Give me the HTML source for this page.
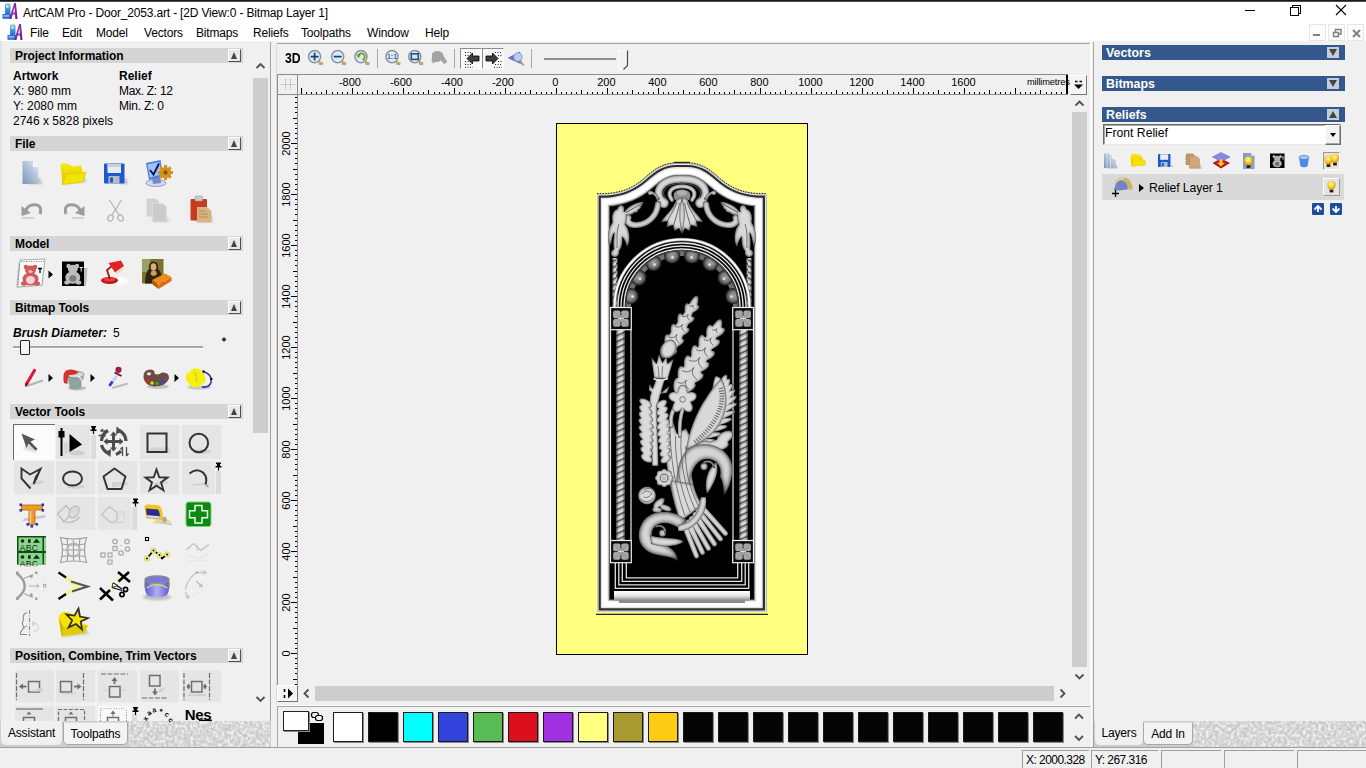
<!DOCTYPE html>
<html lang="en">
<head>
<meta charset="utf-8">
<title>ArtCAM Pro - Door_2053.art</title>
<style>
*{box-sizing:border-box;margin:0;padding:0}
html,body{width:1366px;height:768px;overflow:hidden}
body{position:relative;background:#f0f0f0;font-family:"Liberation Sans",Arial,sans-serif;font-size:12px;color:#000;line-height:1}
div,span,svg,b,i{position:absolute}
svg{overflow:visible}
.t{white-space:nowrap;line-height:14px;height:14px}
.ui{font-size:12px;letter-spacing:-0.17px;color:#000}
#topline{left:0;top:0;width:1366px;height:2px;background:linear-gradient(#1b1b1b 0,#1b1b1b 55%,#8a8a8a 100%)}
#titlebar{left:0;top:2px;width:1366px;height:20px;background:#fff}
#menubar{left:0;top:22px;width:1366px;height:19px;background:#fff}
.menu{top:26px}
.mdib{top:24px;width:17px;height:17px;border:1px solid #e6e6e6;background:#fcfcfc}
/* left */
.hdr{left:10px;width:233px;height:15px;background:#d5d5d5}
.hdr b{left:5px;top:1px;line-height:15px;font-size:12px;letter-spacing:-0.08px;white-space:nowrap}
.hdr i{right:2px;top:1px;width:13px;height:13px;background:#e8e8e8;border:1px solid;border-color:#fff #505050 #505050 #fff}
.hdr i:after{content:"";position:absolute;left:2px;top:2px;border:3.5px solid transparent;border-top:0;border-bottom:7px solid #444}
.lt{font-size:12px;white-space:nowrap;line-height:14px}
.cell{background:#e5e5e5}
.pin{background:#dcdcdc}
/* right */
.bh{left:1102px;width:243px;height:15px;background:#34588c}
.bh b{left:4px;top:1px;line-height:15px;font-size:12.4px;color:#fff;white-space:nowrap}
.bh i{right:6px;top:2px;width:12px;height:11px;background:#c3ccd9}
.bh i.dn:after{content:"";position:absolute;left:2px;top:2px;border:4px solid transparent;border-bottom:0;border-top:7px solid #444}
.bh i.up:after{content:"";position:absolute;left:2px;top:2px;border:4px solid transparent;border-top:0;border-bottom:7px solid #444}
.tabstrip{height:26px;background:#cdcdcd}
.tab{top:0;height:25px;line-height:24px;font-size:12px;letter-spacing:-0.17px;text-align:center;white-space:nowrap}
.sw{top:712px;width:30px;height:30px;border:1px solid #1a1a1a;box-shadow:1px 1px 0 #8a8a8a}
.sb{top:750px;height:18px;border-left:1px solid #a0a0a0;border-top:1px solid #a0a0a0;background:#f0f0f0}
.sb span{left:3px;top:1px;line-height:16px;font-size:12px;letter-spacing:-0.55px;white-space:nowrap}
.rl{font-size:11px;line-height:11px;white-space:nowrap;text-align:center;width:40px}
.rv{font-size:11px;line-height:11px;white-space:nowrap;text-align:center;width:40px;height:11px;transform:rotate(-90deg);transform-origin:50% 50%}
</style>
</head>
<body>
<div id="topline"></div>
<div id="titlebar"></div>
<div id="menubar"></div>
<span class="t ui" style="left:23px;top:5.5px">ArtCAM Pro - Door_2053.art - [2D View:0 - Bitmap Layer 1]</span>
<span class="t ui menu" style="left:30px">File</span>
<span class="t ui menu" style="left:62px">Edit</span>
<span class="t ui menu" style="left:96px">Model</span>
<span class="t ui menu" style="left:144px">Vectors</span>
<span class="t ui menu" style="left:196px">Bitmaps</span>
<span class="t ui menu" style="left:253px">Reliefs</span>
<span class="t ui menu" style="left:301px">Toolpaths</span>
<span class="t ui menu" style="left:367px">Window</span>
<span class="t ui menu" style="left:425px">Help</span>
<div class="mdib" style="left:1309px"></div>
<div class="mdib" style="left:1328px"></div>
<div class="mdib" style="left:1347px"></div>
<!-- LEFT PANEL -->
<div style="left:0;top:41px;width:2px;height:707px;background:linear-gradient(90deg,#dcdcdc,#ececec)"></div>
<div style="left:270px;top:42px;width:1px;height:679px;background:#a3a3a3"></div>
<div style="left:253px;top:78px;width:15px;height:355px;background:#cdcdcd"></div>
<div class="hdr" style="top:48px"><b>Project Information</b><i></i></div>
<span class="lt" style="left:13px;top:69px;font-weight:bold">Artwork</span>
<span class="lt" style="left:119px;top:69px;font-weight:bold">Relief</span>
<span class="lt" style="left:13px;top:84px">X: 980 mm</span>
<span class="lt" style="left:119px;top:84px;letter-spacing:-0.3px">Max. Z: 12</span>
<span class="lt" style="left:13px;top:99px">Y: 2080 mm</span>
<span class="lt" style="left:119px;top:99px;letter-spacing:-0.22px">Min. Z: 0</span>
<span class="lt" style="left:13px;top:114px">2746 x 5828 pixels</span>
<div class="hdr" style="top:136px"><b>File</b><i></i></div>
<div class="hdr" style="top:236px"><b>Model</b><i></i></div>
<div class="hdr" style="top:300px"><b>Bitmap Tools</b><i></i></div>
<span class="lt" style="left:13px;top:326px;font-weight:bold;font-style:italic;font-size:12px;letter-spacing:0.05px">Brush Diameter:</span>
<span class="lt" style="left:113px;top:326px">5</span>
<div style="left:13px;top:346px;width:190px;height:2px;background:#a8a8a8;border-bottom:1px solid #fff;height:3px"></div>
<div style="left:20px;top:340px;width:10px;height:15px;background:#f4f4f4;border:1px solid #222;border-radius:1px"></div>
<div class="hdr" style="top:404px"><b>Vector Tools</b><i></i></div>
<!-- vector tool cells -->
<div style="left:13px;top:424px;width:42px;height:36px;background:#fcfcfc;border-top:1px solid #6a6a6a;border-left:1px solid #6a6a6a"></div>
<div class="cell" style="left:56px;top:425px;width:34px;height:34px"></div>
<div class="pin" style="left:91px;top:435px;width:5px;height:24px"></div>
<div class="cell" style="left:140px;top:425px;width:39px;height:34px"></div>
<div class="cell" style="left:182px;top:425px;width:39px;height:34px"></div>
<div class="cell" style="left:14px;top:461px;width:40px;height:33px"></div>
<div class="cell" style="left:56px;top:461px;width:39px;height:33px"></div>
<div class="cell" style="left:98px;top:461px;width:39px;height:33px"></div>
<div class="cell" style="left:140px;top:461px;width:39px;height:33px"></div>
<div class="cell" style="left:182px;top:461px;width:33px;height:33px"></div>
<div class="pin" style="left:216px;top:471px;width:5px;height:23px"></div>
<div class="cell" style="left:56px;top:497px;width:39px;height:33px"></div>
<div class="cell" style="left:98px;top:497px;width:33px;height:33px"></div>
<div class="pin" style="left:132px;top:507px;width:5px;height:23px"></div>
<div class="hdr" style="top:648px"><b>Position, Combine, Trim Vectors</b><i></i></div>
<div class="cell" style="left:15px;top:670px;width:39px;height:32px"></div>
<div class="cell" style="left:56px;top:670px;width:39px;height:32px"></div>
<div class="cell" style="left:98px;top:670px;width:39px;height:32px"></div>
<div class="cell" style="left:140px;top:670px;width:39px;height:32px"></div>
<div class="cell" style="left:182px;top:670px;width:39px;height:32px"></div>
<div class="cell" style="left:15px;top:706px;width:39px;height:15px"></div>
<div class="cell" style="left:56px;top:706px;width:39px;height:15px"></div>
<div style="left:98px;top:706px;width:33px;height:15px;background:#f8f8f8"></div>
<div class="pin" style="left:132px;top:714px;width:5px;height:7px"></div>
<!-- left tabs -->
<div class="tabstrip" id="ltabs" style="left:0;top:721px;width:271px">
  <div class="tab" style="left:1px;width:61px;background:#f0f0f0;border-radius:0 0 5px 5px;height:24px">Assistant</div>
  <div class="tab" style="left:63px;width:65px;top:1px;height:23px;line-height:22px;background:#f3f3f3;border:1px solid #a8a8a8;border-top-color:#ddd;border-radius:0 0 5px 5px">Toolpaths</div>
</div>
<div style="left:0;top:747px;width:1366px;height:1px;background:#a0a0a0"></div>
<!-- CENTER: 2D VIEW -->
<div style="left:276px;top:43px;width:814px;height:1px;background:#a0a0a0"></div>
<div style="left:276px;top:43px;width:1px;height:662px;background:#dadada"></div>
<div style="left:1090px;top:43px;width:1px;height:662px;background:#fdfdfd"></div>
<div style="left:460px;top:48px;width:22px;height:21px;background:#f9f9f9;border:1px solid;border-color:#8c8c8c #fff #fff #8c8c8c"></div>
<div style="left:482px;top:48px;width:22px;height:21px;background:#f9f9f9;border:1px solid;border-color:#8c8c8c #fff #fff #8c8c8c"></div>
<div style="left:377px;top:49px;width:1px;height:19px;background:#a8a8a8"></div>
<div style="left:454px;top:49px;width:1px;height:19px;background:#a8a8a8"></div>
<div style="left:531px;top:49px;width:1px;height:19px;background:#a8a8a8"></div>
<span style="left:284.5px;top:48.6px;font-size:15.5px;line-height:18px;font-weight:bold;transform:scaleX(0.79);transform-origin:0 0">3D</span>
<div style="left:544px;top:58px;width:72px;height:2px;background:#8f8f8f"></div>
<div style="left:277px;top:74px;width:791px;height:1px;background:#8c8c8c"></div>
<div style="left:277px;top:94px;width:791px;height:1px;background:#8c8c8c"></div>
<div style="left:277px;top:74px;width:1px;height:611px;background:#8c8c8c"></div>
<div style="left:297px;top:74px;width:1px;height:611px;background:#8c8c8c"></div>
<span class="rl" style="left:329.9px;top:77px">-800</span>
<span class="rl" style="left:380.9px;top:77px">-600</span>
<span class="rl" style="left:431.9px;top:77px">-400</span>
<span class="rl" style="left:482.9px;top:77px">-200</span>
<span class="rl" style="left:535.4px;top:77px">0</span>
<span class="rl" style="left:586.4px;top:77px">200</span>
<span class="rl" style="left:637.4px;top:77px">400</span>
<span class="rl" style="left:688.4px;top:77px">600</span>
<span class="rl" style="left:739.4px;top:77px">800</span>
<span class="rl" style="left:790.4px;top:77px">1000</span>
<span class="rl" style="left:841.4px;top:77px">1200</span>
<span class="rl" style="left:892.4px;top:77px">1400</span>
<span class="rl" style="left:943.4px;top:77px">1600</span>
<span class="rv" style="left:265.5px;top:648.0px">0</span>
<span class="rv" style="left:265.5px;top:597.0px">200</span>
<span class="rv" style="left:265.5px;top:546.0px">400</span>
<span class="rv" style="left:265.5px;top:495.0px">600</span>
<span class="rv" style="left:265.5px;top:444.0px">800</span>
<span class="rv" style="left:265.5px;top:393.0px">1000</span>
<span class="rv" style="left:265.5px;top:342.0px">1200</span>
<span class="rv" style="left:265.5px;top:291.0px">1400</span>
<span class="rv" style="left:265.5px;top:240.0px">1600</span>
<span class="rv" style="left:265.5px;top:189.0px">1800</span>
<span class="rv" style="left:265.5px;top:138.0px">2000</span>
<span style="left:1027px;top:77px;font-size:9.3px;line-height:11px;letter-spacing:-0.15px;white-space:nowrap">millimetres</span>
<div style="left:1070px;top:75px;width:17px;height:20px;background:#f4f4f4;border:1px solid;border-color:#fff #777 #777 #fff"></div>
<div style="left:1072px;top:112px;width:15px;height:555px;background:#cdcdcd"></div>
<div style="left:277px;top:685px;width:21px;height:17px;background:#f4f4f4;border:1px solid;border-color:#fff #777 #777 #fff"></div>
<div style="left:315px;top:686px;width:739px;height:15px;background:#cdcdcd"></div>
<div style="left:277px;top:705px;width:813px;height:1px;background:#fbfbfb"></div>
<div style="left:277px;top:706px;width:813px;height:1px;background:#a6a6a6"></div>
<div style="left:277px;top:706px;width:1px;height:41px;background:#a6a6a6"></div>
<div style="left:298px;top:723px;width:26px;height:21px;background:#000"></div>
<div style="left:283px;top:711px;width:26px;height:20px;background:#fff;border:1px solid #222;box-shadow:1px 1px 0 #888"></div>
<div class="sw" style="left:333px;background:#ffffff"></div>
<div class="sw" style="left:368px;background:#000000"></div>
<div class="sw" style="left:403px;background:#00ffff"></div>
<div class="sw" style="left:438px;background:#3344dd"></div>
<div class="sw" style="left:473px;background:#58bb55"></div>
<div class="sw" style="left:508px;background:#dc0f1e"></div>
<div class="sw" style="left:543px;background:#a030e0"></div>
<div class="sw" style="left:578px;background:#ffff80"></div>
<div class="sw" style="left:613px;background:#a89a30"></div>
<div class="sw" style="left:648px;background:#fccc14"></div>
<div class="sw" style="left:683px;background:#050505"></div>
<div class="sw" style="left:718px;background:#050505"></div>
<div class="sw" style="left:753px;background:#050505"></div>
<div class="sw" style="left:788px;background:#050505"></div>
<div class="sw" style="left:823px;background:#050505"></div>
<div class="sw" style="left:858px;background:#050505"></div>
<div class="sw" style="left:893px;background:#050505"></div>
<div class="sw" style="left:928px;background:#050505"></div>
<div class="sw" style="left:963px;background:#050505"></div>
<div class="sw" style="left:998px;background:#050505"></div>
<div class="sw" style="left:1033px;background:#050505"></div>
<!-- RIGHT PANEL -->
<div style="left:1093px;top:42px;width:1px;height:705px;background:#a3a3a3"></div>
<div style="left:1091px;top:42px;width:1px;height:705px;background:#fafafa"></div>
<div class="bh" style="top:45px"><b>Vectors</b><i class="dn"></i></div>
<div class="bh" style="top:76px"><b>Bitmaps</b><i class="dn"></i></div>
<div class="bh" style="top:107px"><b>Reliefs</b><i class="up"></i></div>
<div style="left:1103px;top:124px;width:238px;height:21px;background:#fff;border:1px solid;border-color:#6a6a6a #e8e8e8 #e8e8e8 #6a6a6a;box-shadow:inset 1px 1px 0 #a8a8a8"></div>
<span class="lt" style="left:1105px;top:126px;font-size:12.2px">Front Relief</span>
<div style="left:1325px;top:125px;width:16px;height:20px;background:#f2f2f2;border:1px solid;border-color:#fff #6e6e6e #6e6e6e #fff;box-shadow:inset -1px -1px 0 #a8a8a8"></div>
<div style="left:1329.5px;top:133px;width:0;height:0;border:3.5px solid transparent;border-bottom:0;border-top:4px solid #000"></div>
<div style="left:1102px;top:174px;width:242px;height:26px;background:#d9d9d9"></div>
<span class="lt" style="left:1149px;top:181px;font-size:12.2px;letter-spacing:-0.1px">Relief Layer 1</span>
<div style="left:1139px;top:184px;width:0;height:0;border:4px solid transparent;border-right:0;border-left:5px solid #000"></div>
<div style="left:1323px;top:178px;width:17px;height:18px;background:#e4e4e4;border:1px solid;border-color:#fff #9a9a9a #9a9a9a #fff"></div>
<div style="left:1323px;top:152px;width:17px;height:18px;background:#e8e4dc;border:1px solid;border-color:#999 #fff #fff #999"></div>
<div style="left:1312px;top:203px;width:12px;height:12px;background:#1d4f9e;border-radius:1px"></div>
<div style="left:1330px;top:203px;width:12px;height:12px;background:#1d4f9e;border-radius:1px"></div>
<!-- right tabs -->
<div class="tabstrip" style="left:1094px;top:721px;width:272px">
  <div class="tab" style="left:1px;width:48px;background:#f0f0f0;height:24px;border-radius:0 0 5px 5px">Layers</div>
  <div class="tab" style="left:49px;width:50px;top:1px;height:23px;line-height:22px;background:#f3f3f3;border:1px solid #a8a8a8;border-top-color:#ddd;border-radius:0 0 5px 5px">Add In</div>
</div>
<!-- STATUS BAR -->
<div class="sb" style="left:1022px;width:67px"><span>X: 2000.328</span></div>
<div class="sb" style="left:1091px;width:67px"><span>Y: 267.316</span></div>
<div class="sb" style="left:1161px;width:60px"></div>
<div class="sb" style="left:1224px;width:70px"></div>
<div class="sb" style="left:1297px;width:69px"></div>
<svg id="ov" style="left:0;top:0" width="1366" height="768" viewBox="0 0 1366 768">
<defs>
<linearGradient id="gBlue" x1="0" y1="0" x2="0" y2="1"><stop offset="0" stop-color="#7cc8d8"/><stop offset=".45" stop-color="#4a98e4"/><stop offset="1" stop-color="#2468cc"/></linearGradient>
<linearGradient id="gPur" x1="0" y1="0" x2="1" y2="0"><stop offset="0" stop-color="#5a1a8a"/><stop offset=".5" stop-color="#a040c0"/><stop offset="1" stop-color="#6a0a80"/></linearGradient>
<g id="app">
 <rect x="2.5" y="0.5" width="5.5" height="11" rx="1.5" fill="url(#gBlue)"/>
 <rect x="3.7" y="2" width="2.6" height="3" rx="1" fill="#bfe6f4"/>
 <rect x="0" y="11" width="8.5" height="4.8" fill="#2a6fd2"/>
 <rect x="1" y="12.2" width="6" height="1.4" fill="#9fc4ee"/>
 <path d="M6.8 16 L11.6 0 L13.4 0 L15 16 L12.8 16 L12.5 11.5 L10.2 11.5 L9 16 Z M10.7 9.4 L12.4 9.4 L12.1 4 Z" fill="url(#gPur)" fill-rule="evenodd"/>
</g>
<g id="mag">
 <circle cx="0" cy="0" r="6" fill="#d6e9f6" stroke="#8796a6" stroke-width="1.6"/>
 <circle cx="0" cy="0" r="4.6" fill="none" stroke="#f3f9fd" stroke-width=".8"/>
 <path d="M4.6 4.2 L8.6 6.2 Q9.2 8.2 7.6 8.6 L4.2 8.2 Q3.4 6 4.6 4.2Z" fill="#c9a268"/>
</g>
<filter id="noise" x="0" y="0" width="100%" height="100%" color-interpolation-filters="sRGB"><feTurbulence type="fractalNoise" baseFrequency="0.32" numOctaves="2" seed="3" result="n"/><feColorMatrix in="n" type="matrix" values="0 0 0 0 1  0 0 0 0 1  0 0 0 0 1  1.8 0 0 0 -0.62"/></filter>
</defs>
<use href="#app" x="2.5" y="3"/>
<use href="#app" x="7.5" y="24"/>
<!-- window controls -->
<g stroke="#000" stroke-width="1" fill="none" shape-rendering="crispEdges">
 <path d="M1245 10.5H1255"/>
 <path d="M1290.5 7.5H1298.5V15.5H1290.5Z M1292.5 7.5V5.5H1300.5V13.5H1298.5"/>
</g>
<path d="M1336 5L1346 15M1346 5L1336 15" stroke="#000" stroke-width="1.1" fill="none"/>
<g stroke="#808080" fill="none">
 <path d="M1313 35H1320" stroke-width="2"/>
 <path d="M1333.5 32.5H1338.5V36.5H1333.5Z M1335.5 32V29.5H1341V34H1339" stroke-width="1.4"/>
 <path d="M1353 30L1360 37M1360 30L1353 37" stroke-width="2"/>
</g>
<!-- toolbar icons -->
<use href="#mag" x="314.6" y="56.6"/>
<path d="M310.6 56.6H318.6M314.6 52.6V60.6" stroke="#1c3f6e" stroke-width="1.7"/>
<use href="#mag" x="337.7" y="56.6"/>
<path d="M333.7 56.6H341.7" stroke="#1c3f6e" stroke-width="1.7"/>
<use href="#mag" x="361" y="56.6"/>
<path d="M362.5 60 A3.4 3.4 0 1 0 358.2 55.6" stroke="#7d9a1c" stroke-width="1.8" fill="none"/><path d="M356.2 54.4 L360.8 54.6 L358.4 58.6Z" fill="#7d9a1c"/>
<use href="#mag" x="392" y="56.6"/>
<text x="392" y="59.2" font-family="Liberation Sans, sans-serif" font-size="7" font-weight="bold" fill="#4a6a8e" text-anchor="middle">1:1</text>
<use href="#mag" x="414.8" y="56.6"/>
<rect x="411.3" y="53.8" width="7" height="5.6" fill="none" stroke="#24507f" stroke-width="1.6"/>
<path d="M432 57 Q431 51 437 51 Q443 51 443.6 56 L447.4 62 L444 64 L441 60.6 Q438 62.5 435 62 L433 63.6 L431.5 60.5Z" fill="#a3a3a3"/>
<!-- toolbar push buttons -->
<g fill="#3d3d3d">
 <path d="M467 58.5 L472.5 53 V56 H479 V61 H472.5 V64Z" stroke="#000" stroke-width=".8"/>
 <path d="M498 58.5 L492.5 53 V56 H486 V61 H492.5 V64Z" stroke="#000" stroke-width=".8"/>
</g>
<g stroke="#222" stroke-width="1" stroke-dasharray="1 1.5" fill="none">
 <path d="M465 52.5H472M465 55.5H469M465 61.5H469M465 64.5H472M465 67.3H473"/>
 <path d="M495 52.5H502M498 55.5H502M498 61.5H502M495 64.5H502M494 67.3H502"/>
</g>
<!-- eye/look icon -->
<path d="M507.6 58 L520 51.5 L522 64.5Z" fill="#5a6ecb"/>
<circle cx="518" cy="57" r="4.2" fill="#b9cff0" stroke="#8c9cc8" stroke-width="1"/>
<path d="M521 60.5 L524.6 65 L523 66 L519.8 62Z" fill="#c9a268"/>
<!-- slider thumb -->
<path d="M618.5 50.5H627.5V65.5L623.5 69.5H618.5Z" fill="#f2f2f2" stroke="#fdfdfd" stroke-width="1"/>
<path d="M627.5 50.5V65.5L623.5 69.5" fill="none" stroke="#4a4a4a" stroke-width="1.2"/>
<!-- ruler origin icon -->
<g stroke="#b4b4b4" stroke-width="1" stroke-dasharray="1.5 1" fill="none"><path d="M281 84.5H295M285.5 79V90M290.5 79V90"/></g>
<!-- ruler end btn glyph -->
<path d="M1074 84.5H1083L1078.5 89Z" fill="#000"/><path d="M1075 81.5H1077.5M1079.5 81.5H1082" stroke="#000" stroke-width="1.4"/>
<!-- bottom-left btn glyph -->
<path d="M288 688.5V698.5L293 693.5Z" fill="#000"/><path d="M284.5 689V692M284.5 695V698" stroke="#000" stroke-width="1.6"/>
<!-- scrollbar arrows -->
<g stroke="#505050" stroke-width="1.8" fill="none">
 <path d="M256.5 68L260.5 64L264.5 68"/>
 <path d="M256.5 697L260.5 701L264.5 697"/>
 <path d="M1075.5 105.5L1079.5 101.5L1083.5 105.5"/>
 <path d="M1075.5 674.5L1079.5 678.5L1083.5 674.5"/>
 <path d="M308.5 689.5L304.5 693.5L308.5 697.5"/>
 <path d="M1060.5 689.5L1064.5 693.5L1060.5 697.5"/>
 <path d="M1075 718.5L1079 714.5L1083 718.5"/>
 <path d="M1075 736L1079 740L1083 736"/>
</g>
<!-- palette link icon -->
<g stroke="#000" stroke-width="1.2" fill="#f0f0f0"><rect x="311.5" y="712.5" width="7" height="5" rx="2.2"/><rect x="315.5" y="715.5" width="7" height="5" rx="2.2"/></g>
<!-- tabstrip texture -->
<rect x="129" y="721" width="141" height="26" fill="#c9c9c9"/><rect x="129" y="721" width="141" height="26" fill="#fff" filter="url(#noise)"/>
<rect x="1193" y="721" width="173" height="26" fill="#c9c9c9"/><rect x="1193" y="721" width="173" height="26" fill="#fff" filter="url(#noise)"/>
<path d="M301.5 88V94M306.5 92V94M311.5 92V94M316.5 92V94M321.5 92V94M326.5 90V94M332.5 92V94M337.5 92V94M342.5 92V94M347.5 92V94M352.5 88V94M357.5 92V94M362.5 92V94M367.5 92V94M372.5 92V94M377.5 90V94M383.5 92V94M388.5 92V94M393.5 92V94M398.5 92V94M403.5 88V94M408.5 92V94M413.5 92V94M418.5 92V94M423.5 92V94M428.5 90V94M434.5 92V94M439.5 92V94M444.5 92V94M449.5 92V94M454.5 88V94M459.5 92V94M464.5 92V94M469.5 92V94M474.5 92V94M479.5 90V94M485.5 92V94M490.5 92V94M495.5 92V94M500.5 92V94M505.5 88V94M510.5 92V94M515.5 92V94M520.5 92V94M525.5 92V94M530.5 90V94M536.5 92V94M541.5 92V94M546.5 92V94M551.5 92V94M556.5 88V94M561.5 92V94M566.5 92V94M571.5 92V94M576.5 92V94M581.5 90V94M587.5 92V94M592.5 92V94M597.5 92V94M602.5 92V94M607.5 88V94M612.5 92V94M617.5 92V94M622.5 92V94M627.5 92V94M632.5 90V94M638.5 92V94M643.5 92V94M648.5 92V94M653.5 92V94M658.5 88V94M663.5 92V94M668.5 92V94M673.5 92V94M678.5 92V94M683.5 90V94M689.5 92V94M694.5 92V94M699.5 92V94M704.5 92V94M709.5 88V94M714.5 92V94M719.5 92V94M724.5 92V94M729.5 92V94M734.5 90V94M740.5 92V94M745.5 92V94M750.5 92V94M755.5 92V94M760.5 88V94M765.5 92V94M770.5 92V94M775.5 92V94M780.5 92V94M785.5 90V94M791.5 92V94M796.5 92V94M801.5 92V94M806.5 92V94M811.5 88V94M816.5 92V94M821.5 92V94M826.5 92V94M831.5 92V94M836.5 90V94M842.5 92V94M847.5 92V94M852.5 92V94M857.5 92V94M862.5 88V94M867.5 92V94M872.5 92V94M877.5 92V94M882.5 92V94M887.5 90V94M893.5 92V94M898.5 92V94M903.5 92V94M908.5 92V94M913.5 88V94M918.5 92V94M923.5 92V94M928.5 92V94M933.5 92V94M938.5 90V94M944.5 92V94M949.5 92V94M954.5 92V94M959.5 92V94M964.5 88V94M969.5 92V94M974.5 92V94M979.5 92V94M984.5 92V94M989.5 90V94M995.5 92V94M1000.5 92V94M1005.5 92V94M1010.5 92V94M1015.5 88V94M1020.5 92V94M1025.5 92V94M1030.5 92V94M1035.5 92V94M1040.5 90V94M1046.5 92V94M1051.5 92V94M1056.5 92V94M1061.5 92V94M1066.5 75V94M1067.5 75V94M295 684.5H297M293 679.5H297M295 673.5H297M295 668.5H297M295 663.5H297M295 658.5H297M291 653.5H297M295 648.5H297M295 643.5H297M295 638.5H297M295 633.5H297M293 628.5H297M295 622.5H297M295 617.5H297M295 612.5H297M295 607.5H297M291 602.5H297M295 597.5H297M295 592.5H297M295 587.5H297M295 582.5H297M293 577.5H297M295 571.5H297M295 566.5H297M295 561.5H297M295 556.5H297M291 551.5H297M295 546.5H297M295 541.5H297M295 536.5H297M295 531.5H297M293 526.5H297M295 520.5H297M295 515.5H297M295 510.5H297M295 505.5H297M291 500.5H297M295 495.5H297M295 490.5H297M295 485.5H297M295 480.5H297M293 475.5H297M295 469.5H297M295 464.5H297M295 459.5H297M295 454.5H297M291 449.5H297M295 444.5H297M295 439.5H297M295 434.5H297M295 429.5H297M293 424.5H297M295 418.5H297M295 413.5H297M295 408.5H297M295 403.5H297M291 398.5H297M295 393.5H297M295 388.5H297M295 383.5H297M295 378.5H297M293 373.5H297M295 367.5H297M295 362.5H297M295 357.5H297M295 352.5H297M291 347.5H297M295 342.5H297M295 337.5H297M295 332.5H297M295 327.5H297M293 322.5H297M295 316.5H297M295 311.5H297M295 306.5H297M295 301.5H297M291 296.5H297M295 291.5H297M295 286.5H297M295 281.5H297M295 276.5H297M293 271.5H297M295 265.5H297M295 260.5H297M295 255.5H297M295 250.5H297M291 245.5H297M295 240.5H297M295 235.5H297M295 230.5H297M295 225.5H297M293 220.5H297M295 214.5H297M295 209.5H297M295 204.5H297M295 199.5H297M291 194.5H297M295 189.5H297M295 184.5H297M295 179.5H297M295 174.5H297M293 169.5H297M295 163.5H297M295 158.5H297M295 153.5H297M295 148.5H297M291 143.5H297M295 138.5H297M295 133.5H297M295 128.5H297M295 123.5H297M293 118.5H297M295 112.5H297M295 107.5H297M295 102.5H297M295 97.5H297" stroke="#000" stroke-width="1" fill="none" shape-rendering="crispEdges"/>
<defs>
<linearGradient id="gPage" x1="0" y1="1" x2="1" y2="0"><stop offset="0" stop-color="#7d95bb"/><stop offset=".6" stop-color="#b8c6dc"/><stop offset="1" stop-color="#eef2f8"/></linearGradient>
<linearGradient id="gFold" x1="0" y1="0" x2="0" y2="1"><stop offset="0" stop-color="#f7ea10"/><stop offset="1" stop-color="#dcc800"/></linearGradient>
<linearGradient id="gShadow" x1="0" y1="0" x2="1" y2="0"><stop offset="0" stop-color="#9a9a9a"/><stop offset="1" stop-color="#d0d0d0"/></linearGradient>
<linearGradient id="gCup" x1="0" y1="0" x2="1" y2="0"><stop offset="0" stop-color="#5a5ad0"/><stop offset=".5" stop-color="#b0b0f4"/><stop offset="1" stop-color="#5a5ad0"/></linearGradient>
<filter id="blur1" x="-20%" y="-20%" width="140%" height="140%"><feGaussianBlur stdDeviation="0.8"/></filter>
<g id="tri"><path d="M0 0V8L4.5 4Z" fill="#000"/></g>
<g id="pinic"><path d="M0.5 0H5.5V1.6H4.6V3.6H6V5H3.6V8H2.4V5H0V3.6H1.4V1.6H0.5Z" fill="#000"/></g>
</defs>
<!-- ===== FILE row 1 ===== -->
<path d="M27 184H43L40 178H30Z" fill="#c4c4c4" filter="url(#blur1)"/>
<path d="M22.5 161H33L38.5 167V184H22.5Z" fill="url(#gPage)"/><path d="M33 161V167H38.5Z" fill="#f6f8fb"/>
<path d="M62 184 L86 182 L84 176 L66 178Z" fill="#bdbdbd" filter="url(#blur1)"/>
<path d="M60.5 166 Q61 162.5 64 163 L70 164.5 L72 166.5 L80 165.5 Q82 166 82 168 L82.5 172 L86 172.5 L83 182 L62.5 184.5 Z" fill="url(#gFold)"/>
<path d="M62.5 184.5 L66 174.5 L86 172.5 L83 182Z" fill="#f3e300" stroke="#d6c200" stroke-width=".5"/>
<path d="M120 184H128L126 178H120Z" fill="#bdbdbd" filter="url(#blur1)"/>
<rect x="104" y="163.5" width="20.5" height="20" rx="1" fill="#1c5acb"/>
<rect x="107.5" y="164" width="13.5" height="9" fill="#e9edf2"/><rect x="107.5" y="164" width="13.5" height="3" fill="#c9d0da"/>
<rect x="108.5" y="176" width="11" height="7.5" fill="#b4bcc8"/><rect x="110" y="177.5" width="3" height="5" fill="#1c5acb"/>
<!-- options -->
<ellipse cx="156" cy="183" rx="10" ry="3.5" fill="#d0d8ea" stroke="#8090c0" stroke-width=".8"/>
<path d="M152 178 L160 176 L161 183 L153 184Z" fill="#7a86c8"/>
<path d="M146 163 L160.5 160 L163 176 L149 180Z" fill="#4a7fe0"/><path d="M147.5 164.5 L159.5 162 L161.5 174.5 L150 177.5Z" fill="#9ec4f4"/>
<path d="M150 170 L153.5 174.5 L159 163.5" stroke="#0c0c50" stroke-width="1.8" fill="none"/>
<circle cx="165.5" cy="172.5" r="5.6" fill="#d8901c"/><circle cx="165.5" cy="172.5" r="2" fill="#7a5010"/>
<g stroke="#d8901c" stroke-width="3"><path d="M165.5 165V180M158 172.5H173M160.2 167.2L170.8 177.8M170.8 167.2L160.2 177.8"/></g><circle cx="165.5" cy="172.5" r="2" fill="#805410"/>
<!-- ===== FILE row 2 (disabled) ===== -->
<g fill="none" stroke="#9c9c9c" stroke-width="3"><path d="M40 214 Q43 203.5 32 205 Q27 206 26 211"/><path d="M66 214 Q63 203.5 74 205 Q79 206 80 211"/></g>
<path d="M21.5 206 L31 213 L21.5 216Z" fill="#9c9c9c"/><path d="M84.5 206 L75 213 L84.5 216Z" fill="#9c9c9c"/>
<path d="M22 218H34M72 218H84" stroke="#c8c8c8" stroke-width="1.5"/>
<g fill="none" stroke="#b2b2b2" stroke-width="1.2"><path d="M109.5 200 L119 215M121.5 200 L112 215"/><ellipse cx="110.5" cy="218" rx="2.6" ry="3.2" transform="rotate(30 110.5 218)"/><ellipse cx="120.5" cy="218" rx="2.6" ry="3.2" transform="rotate(-30 120.5 218)"/></g>
<path d="M152 222H170L167 216H152Z" fill="#d6d6d6" filter="url(#blur1)"/>
<path d="M146.5 198.500H156L159 201.500V216.500H146.500Z" fill="#d2d2d2"/><path d="M152.5 203.500H163L166.5 207V222H152.500Z" fill="#cbcbcb" stroke="#e2e2e2" stroke-width=".6"/>
<!-- paste -->
<path d="M196 222H213L211 216H196Z" fill="#c4c4c4" filter="url(#blur1)"/>
<rect x="190.5" y="199" width="16.5" height="21.5" rx="1" fill="#c63a22"/><rect x="195" y="196" width="7.5" height="5" rx="1" fill="#c9c9c9" stroke="#9a9a9a" stroke-width=".6"/>
<path d="M197 207H207L211.5 211V222.500H197Z" fill="#d9b384"/><path d="M199 211H206M199 214H208M199 217H208" stroke="#b48a58" stroke-width=".9"/>
<!-- ===== MODEL ===== -->
<path d="M18 262 L45 260 L43 286 L16 288Z" fill="#d9d9d9"/><path d="M20 260 L45 259 L42 285 L17.5 287Z" fill="#fbfbfb" stroke="#9a9a9a" stroke-width=".8"/>
<path d="M21 261.500H44" stroke="#777" stroke-width="1" stroke-dasharray="1 1.5"/><path d="M19.5 264 L18 285" stroke="#777" stroke-width="1" stroke-dasharray="1 1.5"/>
<g fill="#d25a5a"><circle cx="26" cy="267" r="2.3"/><circle cx="35" cy="267" r="2.3"/><ellipse cx="30.5" cy="270" rx="5.5" ry="4.6"/><ellipse cx="30.5" cy="279" rx="8" ry="6.5"/><ellipse cx="24" cy="283.5" rx="3" ry="2.2"/><ellipse cx="37" cy="283.5" rx="3" ry="2.2"/></g>
<ellipse cx="30.5" cy="280" rx="4.5" ry="4" fill="#f6d6d6"/><ellipse cx="30.5" cy="271.5" rx="2.2" ry="1.6" fill="#f0b8b8"/>
<path d="M38 268.500H42M40 268.500V273" stroke="#000" stroke-width="1.3"/>
<use href="#tri" x="48.5" y="270.5"/>
<path d="M84 268H87.500L86 286H84Z" fill="#bdbdbd"/>
<rect x="62" y="261.5" width="22" height="24.5" fill="#000"/>
<g fill="#bdbdbd"><circle cx="68.5" cy="266" r="2.2"/><circle cx="77" cy="266" r="2.2"/><ellipse cx="72.8" cy="269" rx="5" ry="4.2"/><ellipse cx="72.8" cy="277.5" rx="7.5" ry="6.2"/><ellipse cx="67" cy="282.5" rx="2.8" ry="2"/><ellipse cx="78.5" cy="282.5" rx="2.8" ry="2"/></g>
<ellipse cx="72.8" cy="278.5" rx="3.6" ry="3.3" fill="#7d7d7d"/><path d="M79.5 267.500H83M81.2 267.500V271.5" stroke="#e8e8e8" stroke-width="1.1"/>
<ellipse cx="119" cy="281" rx="10" ry="3.5" fill="#fff" filter="url(#blur1)"/>
<ellipse cx="109.5" cy="280.5" rx="8.5" ry="3.4" fill="#c41414"/><ellipse cx="109.5" cy="279.5" rx="6" ry="2" fill="#e84040"/>
<path d="M110 279 L107 270 L112 266" stroke="#a81010" stroke-width="1.8" fill="none"/>
<path d="M108.5 263 L121 260.5 L124 266 L115 272.500Z" fill="#e22222"/><path d="M115 272.5 L124 266 L123 269.5 L117.5 273.500Z" fill="#f8d0c0"/>
<rect x="142" y="259" width="21.5" height="24.5" fill="#7b7232"/><path d="M142 259H150V272H142Z" fill="#98a068"/>
<path d="M145 283.5 Q145 272 149 269 Q148 262 153.5 261.5 Q159 262 158 269 Q162 272 163 283.500Z" fill="#2e2412"/><ellipse cx="153.5" cy="267" rx="2.9" ry="3.7" fill="#dcae6c"/><path d="M150.5 274 Q153.5 278 157 274 L156 271 H151.500Z" fill="#cfa060"/>
<path d="M152 280 L165 273.5 L171.5 277 L158.5 285Z" fill="#f08a1c"/><path d="M152 280 L158.5 285 L158.5 289 L152 284Z" fill="#b85a08"/><path d="M158.5 285 L171.5 277 L171.5 281 L158.5 289Z" fill="#d86c10"/>
<!-- ===== BITMAP TOOLS ===== -->
<path d="M224 337L226.5 339.5L224 342L221.5 339.5Z" fill="#2a3a6a"/>
<path d="M25 386.5 L43 380.5" stroke="#b4b4b4" stroke-width="2.2"/>
<path d="M26.5 384 L34.5 370.5" stroke="#d8203c" stroke-width="3.2" stroke-linecap="round"/><path d="M25.5 386 L27.5 382.5" stroke="#8a1020" stroke-width="1.6"/>
<use href="#tri" x="48.5" y="374"/>
<ellipse cx="77" cy="388" rx="9" ry="2.6" fill="#bdbdbd"/>
<path d="M67 375 L70 388.5 Q76 391 82 387.5 L84 374Z" fill="#8ea49c"/><ellipse cx="75.5" cy="374.5" rx="8.6" ry="3.4" fill="#d0dcd8" stroke="#70847c" stroke-width=".7"/>
<path d="M78 376 Q84 380 82 387" stroke="#f4f4f4" stroke-width="1.5" fill="none"/>
<path d="M64 383 Q62 374 66 370.5 Q73 367.5 79 372.5 Q74 375.5 69 375 Q67 379 67.5 384Z" fill="#d43030"/>
<use href="#tri" x="90.5" y="374"/>
<path d="M112 388 L128 383.5" stroke="#bdbdbd" stroke-width="2.2"/>
<circle cx="118.5" cy="369.8" r="3.1" fill="#a01a44"/><path d="M114.5 372.5 L121.5 376" stroke="#5a1030" stroke-width="1.8"/>
<path d="M117 375.5 L110.5 384.5" stroke="#cfd4ee" stroke-width="3.2"/><path d="M112.5 381.5 L109.3 386" stroke="#2c3cc0" stroke-width="2.6"/>
<ellipse cx="158" cy="386.5" rx="11" ry="2.5" fill="#c4c4c4"/>
<path d="M143.5 378 Q142.5 369.5 151 369.5 Q155 370 154.5 373.5 Q157.5 376 162 372.5 Q169.5 372 169 378.5 Q166 386.5 154 386.5 Q145 385.5 143.5 378Z" fill="#6c4c3c"/>
<ellipse cx="149" cy="373.8" rx="2.2" ry="1.6" fill="#e8e0dc"/>
<circle cx="147.5" cy="380.5" r="1.7" fill="#e02020"/><circle cx="152" cy="383" r="1.7" fill="#f0d820"/><circle cx="157" cy="383.5" r="1.7" fill="#28b028"/><circle cx="162" cy="381.5" r="1.7" fill="#2848e0"/><circle cx="165.5" cy="378" r="1.5" fill="#9030c0"/>
<use href="#tri" x="174.5" y="374"/>
<ellipse cx="199" cy="387.5" rx="12" ry="2.2" fill="#c8c8c8"/>
<path d="M203 371.5 Q212.5 374 211 382.5 Q209 388 202 387" stroke="#2a3a9a" stroke-width="1.6" fill="none"/><circle cx="203.5" cy="371.5" r="1.3" fill="#111"/><circle cx="211.3" cy="379" r="1.3" fill="#111"/>
<path d="M186 377 Q185.5 372.5 190 372.5 Q190.5 368 195.5 368.5 Q201 368 201.5 372.5 Q206 373.5 205 378 Q207 383.5 201.5 384 Q199.5 388 194.5 387 Q189 387 189 383 Q185 381.5 186 377Z" fill="#f4f010"/>
<path d="M194 372 Q198 376 196 382" stroke="#dcd400" stroke-width="1.4" fill="none"/>
<defs><clipPath id="abcclip"><rect x="17" y="536" width="29" height="28.5"/></clipPath></defs>
<!-- ===== VECTOR TOOLS row 1 ===== -->
<path d="M23 449 L36 452 L38 448 L27 444Z" fill="#d6d6d6" filter="url(#blur1)"/>
<path d="M21.5 433.5 L35 439.5 L30.5 441.5 L37.5 449 L35.5 450.5 L28.5 443.5 L26.5 448Z" fill="#555"/>
<ellipse cx="77" cy="453" rx="8" ry="2.5" fill="#cfcfcf"/><ellipse cx="66" cy="448" rx="2.5" ry="6" fill="#d4d4d4"/>
<path d="M61.5 428V456" stroke="#000" stroke-width="2"/><rect x="58.5" y="431" width="6" height="6.5" fill="#000"/>
<path d="M69.5 434 V452 L82 444.500Z" fill="#000"/>
<use href="#pinic" x="90.5" y="426"/>
<g stroke="#4c4c4c" fill="none" stroke-width="3.2"><path d="M101.5 441 A12.5 12.5 0 0 1 108 430.5"/><path d="M119 430.5 A12.5 12.5 0 0 1 126 441"/><path d="M101.5 445 A12.5 12.5 0 0 0 108 453"/><path d="M121 451 A12 12 0 0 1 116 454.5"/></g>
<g fill="#4c4c4c"><path d="M116.5 426.5 L122.5 431 L116 434.500Z"/><path d="M110.5 457 L104.5 452.5 L111 449Z"/><path d="M113.5 431.5 L117 435.5 H115 V440 H119.5 V438 L123.5 441.5 L119.5 445 V443 H115 V447.5 H117 L113.5 451.5 L110 447.5 H112 V443 H107.5 V445 L103.5 441.5 L107.5 438 V440 H112 V435.5 H110Z"/>
<path d="M100.5 431 H108 M103 429 L100.5 431 M105.5 435.5 H98.5 M103 437.5 L105.5 435.5" stroke="#4c4c4c" stroke-width="1.3" fill="none"/><path d="M122.5 447 V456 M120.5 449.5 L122.5 447 M126.5 456 V447 M128.5 453.5 L126.5 456" stroke="#4c4c4c" stroke-width="1.3" fill="none"/></g>
<path d="M150 452.5 H171 L168.5 447.5 H150Z" fill="#d2d2d2"/><rect x="147.5" y="433.5" width="19" height="18.5" fill="none" stroke="#333" stroke-width="2"/>
<ellipse cx="202" cy="451.5" rx="9.5" ry="2.2" fill="#d2d2d2"/><circle cx="198.8" cy="443" r="9.3" fill="none" stroke="#333" stroke-width="2"/>
<!-- row 2 -->
<path d="M28 487 L45 482.5 L40 480 L30 484Z" fill="#d2d2d2"/>
<path d="M30.5 488.5 L21.5 478.5 V468.5 L30 474.5 L40.5 469 L33.5 484" fill="none" stroke="#333" stroke-width="1.9" stroke-linejoin="miter"/><path d="M40.5 469 L37 479.5 L33 483.5 L35 476.500Z" fill="#333"/>
<ellipse cx="76" cy="486.5" rx="9" ry="2" fill="#d2d2d2"/><ellipse cx="72.5" cy="478.5" rx="9.5" ry="7" fill="none" stroke="#333" stroke-width="2"/>
<path d="M112 487.5 L129 484.5 L126 482 H112Z" fill="#d2d2d2"/><path d="M114.5 468.5 L125.5 476.5 L121.5 489 H107.5 L103.5 476.500Z" fill="none" stroke="#333" stroke-width="2" stroke-linejoin="round"/>
<path d="M154 486 L169 483 L166 481 L154 483Z" fill="#d2d2d2"/><path d="M156.5 469.5 L159.3 477.2 L167.5 477.5 L161 482.4 L163.4 490.2 L156.5 485.6 L149.6 490.2 L152 482.4 L145.5 477.5 L153.7 477.200Z" fill="none" stroke="#333" stroke-width="1.9" stroke-linejoin="miter"/>
<path d="M192 486 L209 484.5 L207 482.5 L193 484Z" fill="#d2d2d2"/><path d="M189.5 473.5 Q196.5 467.5 203 472.5 Q208 477.5 205.5 484.5" fill="none" stroke="#333" stroke-width="2"/><path d="M205.5 484.5 L208.5 487" stroke="#999" stroke-width="1.6"/>
<use href="#pinic" x="215.5" y="462.5"/>
<!-- row 3 -->
<path d="M22 521.5 L46 517.5 L44 515 L24 518.500Z" fill="#c9c9c9"/>
<path d="M21.5 505 H42.5 V510 H35 V524.5 H29 V510 H21.500Z" fill="#ee9a28" stroke="#b8680c" stroke-width=".8"/><path d="M30.5 511 V523.5" stroke="#fbd48c" stroke-width="1.4"/>
<g fill="#2a30b0"><rect x="19.5" y="503.5" width="2.6" height="2.6"/><rect x="41.5" y="503.5" width="2.6" height="2.6"/><rect x="19.5" y="509" width="2.6" height="2.6"/><rect x="41.5" y="509" width="2.6" height="2.6"/><rect x="26.5" y="523" width="2.6" height="2.6"/><rect x="35.5" y="523" width="2.6" height="2.6"/><rect x="30.5" y="525" width="2.6" height="2.6"/></g>
<g fill="none" stroke="#bdbdbd" stroke-width="1.3"><path d="M57.5 514 L66 505.5 L72 513 L64 521.500Z"/><ellipse cx="74" cy="512" rx="4.5" ry="6.5" transform="rotate(35 74 512)" fill="#dadada"/><path d="M62 521 Q72 525 80 517"/></g>
<g fill="none" stroke="#c2c2c2" stroke-width="1.3"><path d="M101.5 514.5 L109.5 506.5 L117 512.5 L117 520 Q112 524 108.5 520.500Z"/><path d="M117 512 L124 512 L124 522 L113 523" stroke="#d6d6d6"/></g>
<use href="#pinic" x="132.5" y="498.5"/>
<path d="M152 523 L171.5 524.5 L170.5 520.5 L158 518Z" fill="#f0dc80"/><path d="M158 522 L172 525" stroke="#c9c9c9" stroke-width="1.5"/>
<path d="M144.5 508 Q144 504.5 148 504.5 L157.5 505 Q162 506.5 162.5 513 L163 520 L146.5 518.500Z" fill="#f2c420"/>
<path d="M146 508.5 L158 509.5 Q160.5 513 159.5 519 L147 517.500Z" fill="#2c2c8c"/><path d="M146.5 515 L159.8 516.3 L159.5 519 L147 517.500Z" fill="#d8d8e6"/><ellipse cx="164.5" cy="519.5" rx="2.2" ry="2.8" fill="#a8a8a8"/>
<rect x="186" y="502" width="25" height="24.5" rx="2.5" fill="#0c8a10" stroke="#7fd07f" stroke-width="1"/>
<path d="M195 505.5 H202 V510.8 H207.5 V517.8 H202 V523 H195 V517.8 H189.5 V510.8 H195Z" fill="none" stroke="#e8ffe8" stroke-width="1.5"/>
<!-- row 4 -->
<rect x="17" y="536" width="29" height="28.5" fill="#0b4d10"/>
<rect x="18.5" y="537.5" width="24" height="13.5" fill="#8fd28f"/><rect x="18.5" y="553" width="24" height="11.5" fill="#8fd28f"/><rect x="44" y="537.5" width="2" height="13.5" fill="#8fd28f"/><rect x="44" y="553" width="2" height="11.5" fill="#8fd28f"/>
<g fill="#0a300c"><circle cx="22.5" cy="541" r="1.8"/><rect x="28" y="539.3" width="2.6" height="3.5"/><path d="M33 542.8 L36.5 538.5 L40 542.800Z"/><circle cx="22.5" cy="557" r="1.8"/><rect x="28" y="555.3" width="2.6" height="3.5"/><path d="M33 558.8 L36.5 554.5 L40 558.800Z"/></g>
<text x="19.8" y="550.6" font-family="Liberation Sans, sans-serif" font-size="8.5" fill="#0a300c" letter-spacing=".3">ABC</text>
<text x="19.8" y="566.8" font-family="Liberation Sans, sans-serif" font-size="8.5" fill="#0a300c" letter-spacing=".3" clip-path="inset(0 0 2.500px 0)">ABC</text>
<g fill="none" stroke="#9c9c9c" stroke-width="1.1"><path d="M60.5 537.5 Q73.5 540.5 86.5 537.5 Q82.5 550 86.5 562.5 Q73.5 559.5 60.5 562.5 Q64.5 550 60.5 537.500Z"/><path d="M62 544 Q73.5 546 85 544M63 550 H84M62 556.5 Q73.5 554.5 85 556.500M67 539 Q69 550 67 561.500M73.5 539.5 V560.500M80 539 Q78 550 80 561.5"/><circle cx="73.5" cy="550" r="6.5" stroke="#b4b4b4" stroke-width="1.8"/></g>
<g fill="none" stroke="#ababab" stroke-width="1.3"><rect x="101" y="553" width="4" height="4"/><rect x="108" y="553" width="4" height="4"/><rect x="108" y="560" width="4" height="4"/><rect x="113" y="546.5" width="4" height="4"/><circle cx="115" cy="541.5" r="2.2"/><circle cx="127" cy="541.5" r="2.2"/><circle cx="127.5" cy="549" r="2.2"/><circle cx="121" cy="553" r="2.2"/></g><circle cx="121" cy="545.5" r="0.8" fill="#ababab"/>
<rect x="145.5" y="537.5" width="3" height="3" fill="#fff" stroke="#000" stroke-width="1.1"/>
<path d="M147 558.5 L153.5 550.5 L159.5 555 L162 558.5 L167 554.5" fill="none" stroke="#000" stroke-width="1.7"/>
<g fill="#f2f08a" stroke="#c8c440" stroke-width=".6"><circle cx="147" cy="558.5" r="2.7"/><circle cx="153.5" cy="550.5" r="2.7"/><circle cx="159.5" cy="555" r="2.7"/><circle cx="167" cy="554.5" r="2.7"/></g><g fill="#000"><circle cx="147" cy="558.5" r=".9"/><circle cx="153.5" cy="550.5" r=".9"/><circle cx="159.5" cy="555" r=".9"/><circle cx="167" cy="554.5" r=".9"/></g>
<g fill="none"><path d="M186 550 L193.5 543.5 L201 550.5 L209 544.5" stroke="#bdbdbd" stroke-width="1.2"/><path d="M186 558 Q190 554 194 557 T202 557 T210 556" stroke="#dadada" stroke-width="1.2" stroke-dasharray="1.5 1"/><path d="M188 562 Q196 559 208 561" stroke="#e0e0e0" stroke-width="1.2" stroke-dasharray="1.5 1"/><path d="M197.5 545 V551" stroke="#cdcdcd" stroke-width="1"/></g>
<!-- row 5 -->
<g fill="none" stroke="#9c9c9c"><path d="M16.5 573 Q33 586 16.5 599" stroke-width="2.4"/><path d="M24 578.5 L33 574.500M24 593.5 L33 597.5" stroke-width="1"/><path d="M29 586 H39M36.5 584 L39 586 L36.5 588" stroke-width="1" stroke="#b0b0b0"/><path d="M36 573 A14 14 0 0 1 36 599" stroke="#e0e0e0" stroke-width="1" stroke-dasharray="2 1.5"/></g>
<g fill="#9c9c9c"><rect x="16" y="571.5" width="2.6" height="2.6"/><rect x="16" y="597.5" width="2.6" height="2.6"/><rect x="30" y="575" width="2.6" height="2.6"/><rect x="30" y="593.5" width="2.6" height="2.6"/><rect x="35" y="571.5" width="2.4" height="2.4"/><rect x="35" y="597.5" width="2.4" height="2.4"/></g><rect x="43.5" y="584.5" width="2.4" height="2.4" fill="#fff" stroke="#9c9c9c" stroke-width=".8"/>
<path d="M65 577 L77.5 586 L65 595" fill="none" stroke="#f6f6a0" stroke-width="4"/>
<path d="M58.5 572.5 L66 577.500M58.5 599 L66 594" stroke="#000" stroke-width="2.2"/><path d="M66 577.5 L71 581M66 594 L71 590.5" stroke="#d8d860" stroke-width="1" stroke-dasharray="1 1"/><path d="M71 581.5 L87.5 586.5 L72 591.5" fill="none" stroke="#555" stroke-width="2.2" stroke-linejoin="miter"/>
<path d="M110 588 L125 574" stroke="#f6f6b0" stroke-width="3.5"/>
<g stroke="#000" stroke-width="2.5" fill="none"><path d="M100 588 L113 600.500M100 599.5 L110 590"/><path d="M118 572 L130 582M118.5 581.5 L129 572"/></g>
<path d="M113 583 L122 589M112 587.5 L122 590.5" stroke="#000" stroke-width="1.2"/><path d="M113 583 L118 585.5 L112 587.500Z" fill="#fff" stroke="#000" stroke-width=".8"/>
<circle cx="125.5" cy="589.5" r="2.1" fill="none" stroke="#000" stroke-width="1.7"/><circle cx="122" cy="594.5" r="2.1" fill="none" stroke="#000" stroke-width="1.7"/>
<ellipse cx="157" cy="597" rx="14" ry="3.2" fill="#bdbdbd" filter="url(#blur1)"/>
<path d="M145 580 Q144 592 147.5 595.5 Q157 598.5 166.5 595.5 Q170 592 169 580Z" fill="url(#gCup)"/>
<ellipse cx="157" cy="579.5" rx="12" ry="3.6" fill="#7a7ad8" stroke="#8a8a8a" stroke-width="1.4"/><path d="M145 581 V588M169 581 V588" stroke="#8a8a8a" stroke-width="1.2"/>
<path d="M146.5 588 Q157 581 167.5 588" fill="none" stroke="#d8d870" stroke-width="1.4"/>
<g fill="none" stroke="#c6c6c6" stroke-width="1.3"><path d="M196.5 572.5 Q186.5 580 185.5 590"/><path d="M198 572.5 H206M203.5 570.5 L206 572.5 L203.5 574.5"/><path d="M196 581 L202 586.500M201.5 583.5 L202 586.5 L199 586.5" stroke="#bdbdbd"/><path d="M185.5 592 L188.5 598.500M185.5 596 L188.5 598.5 L189 595"/><path d="M192 596 Q204 592 210 580" stroke="#e4e4e4" stroke-dasharray="2 1.5"/></g><circle cx="197" cy="572.5" r="1.3" fill="#aaa"/>
<!-- row 6 -->
<g fill="none" stroke="#8c8c8c" stroke-width="1.1"><path d="M29.5 610 V636" stroke-dasharray="4 1.5 1 1.5"/><path d="M27 612.5 Q22 614 23.5 620 Q21 624 24 627 L20.5 632.5 V634.5 H27"/><path d="M23 629 L27 625.5" stroke="#aaa"/><path d="M32 624 Q37 622 38.5 627 Q38 632 33 631" stroke="#d6d6d6"/><path d="M32 622 L35 623.5 L32.5 625.5" stroke="#c8c8c8"/></g>
<path d="M62 637 L89 634 L86 629 L66 632Z" fill="#c6c6c6" filter="url(#blur1)"/>
<path d="M58.5 618 Q60 612 65 612 L70 612.5 L80 622 L87.5 625.5 L85 633 L61.5 636.5 Z" fill="#f4e400"/><path d="M61.5 636.5 L63.5 627.5 L88 625 L85 633Z" fill="#e2cc00"/><path d="M59 619 L61.5 636 L63.5 627.5 Z" fill="#c8b400"/>
<path d="M78.5 608.5 L80 616.5 L88 618 L80.8 621.5 L82 629.5 L76 624 L68.5 627.5 L72.2 620.3 L66.5 614.5 L74.5 615.600Z" fill="#f4e400" stroke="#2c2c2c" stroke-width="1.7" stroke-linejoin="miter"/>
<!-- ===== POSITION icons ===== -->
<g fill="none" stroke="#6e6e6e" stroke-width="1.5">
<path d="M16.5 673 V700" stroke-dasharray="5 1.5" stroke-width="1.2"/><rect x="28.5" y="681.5" width="11" height="10.5"/><path d="M20 686.5 H26.5" stroke-width="1.8"/>
<rect x="60.5" y="681.5" width="11" height="10.5"/><path d="M74 686.5 H80" stroke-width="1.8"/><path d="M83.5 673 V700" stroke-dasharray="5 1.5" stroke-width="1.2"/>
<path d="M101 674 H128" stroke-dasharray="5 1.5" stroke-width="1.2"/><path d="M114.5 679 V684" stroke-width="1.8"/><rect x="109.5" y="686.5" width="10.5" height="10.5"/>
<rect x="149.5" y="675.5" width="10.5" height="10.5"/><path d="M155 688.5 V693.5" stroke-width="1.8"/><path d="M142 698 H168" stroke-dasharray="5 1.5" stroke-width="1.2"/>
<path d="M184 673 V700M209.5 673 V700" stroke-dasharray="5 1.5" stroke-width="1.2"/><rect x="191.5" y="681.5" width="10.5" height="10.5"/>
<path d="M16 709 H43" stroke-width="1.2"/><path d="M23.5 721 V717.5 H34.5 V721"/>
<path d="M58.5 721 V709.5 H84.5 V721" stroke-dasharray="4 1.5" stroke-width="1.2"/><path d="M65.5 721 V717.5 H76.5 V721"/>
<path d="M100.5 721 V709 M126.5 721 V709" stroke-dasharray="1 1.5" stroke-width="1" stroke="#888"/><path d="M101 708.5 H126" stroke-dasharray="1 1.5" stroke-width="1" stroke="#aaa"/><path d="M107.5 721 V717.5 H118.5 V721"/>
</g>
<g fill="#6e6e6e"><path d="M19 686.5 L23 683.5 V689.500Z"/><path d="M81.5 686.5 L77.5 683.5 V689.500Z"/><path d="M114.5 677 L111.5 681 H117.500Z"/><path d="M155 695.5 L152 691.5 H158Z"/><path d="M186.5 686.5 L188.5 683.5 L190.5 686.5 L188.5 689.500Z"/><path d="M203 686.5 L205 683.5 L207 686.5 L205 689.500Z"/><path d="M29 711.5 L26.5 714.5 H31.500Z"/><path d="M71 711.5 L68.5 714.5 H73.500Z"/><path d="M113 710.5 L110.5 714 H115.500Z M112.5 714 h1 v2.5 h-1Z"/></g>
<path d="M30 691.5 H44 L42 688 H40" fill="#d4d4d4"/><path d="M62 693.5 H76" stroke="#d0d0d0" stroke-width="1.5"/><path d="M121 690 H126 M104 690.5 H108" stroke="#d4d4d4" stroke-width="1.5"/><path d="M160 689 L166 687.5 L162 692 H158Z" fill="#d0d0d0"/><path d="M188 695 H206" stroke="#d0d0d0" stroke-width="2"/>
<use href="#pinic" x="132.5" y="707"/>
<g font-family="Liberation Sans, sans-serif" font-weight="bold" fill="#000">
<text x="184.8" y="720.3" font-size="15" letter-spacing="-.3">Nes</text>
<text x="146.5" y="721.5" font-size="7" transform="rotate(-58 146.5 721.5)">x</text><text x="149" y="716" font-size="7" transform="rotate(-38 149 716)">a</text><text x="153" y="712.8" font-size="7" transform="rotate(-18 153 712.8)">a</text><text x="159" y="714" font-size="8" transform="rotate(8 159 714)">*</text><text x="164" y="715" font-size="7" transform="rotate(38 164 715)">c</text><text x="168" y="719.5" font-size="7" transform="rotate(60 168 719.5)">c</text>
</g>
<rect x="199" y="719.6" width="13" height="1.4" fill="#000"/>
<!-- ===== CANVAS ART ===== -->
<defs>
<filter id="rl2" x="-10%" y="-10%" width="120%" height="120%" color-interpolation-filters="sRGB"><feGaussianBlur in="SourceAlpha" stdDeviation="1.6" result="b"/><feColorMatrix in="b" type="matrix" values="0 0 0 .95 -0.1  0 0 0 .95 -0.1  0 0 0 .95 -0.1  0 0 0 0 1" result="g"/><feComposite in="g" in2="SourceAlpha" operator="in"/></filter>
<filter id="rl1" x="-10%" y="-10%" width="120%" height="120%" color-interpolation-filters="sRGB"><feGaussianBlur in="SourceAlpha" stdDeviation="0.9" result="b"/><feColorMatrix in="b" type="matrix" values="0 0 0 .98 -0.12  0 0 0 .98 -0.12  0 0 0 .98 -0.12  0 0 0 0 1" result="g"/><feComposite in="g" in2="SourceAlpha" operator="in"/></filter>
<filter id="rl3" x="-10%" y="-10%" width="120%" height="120%" color-interpolation-filters="sRGB"><feGaussianBlur in="SourceAlpha" stdDeviation="2.6" result="b"/><feColorMatrix in="b" type="matrix" values="0 0 0 0.94 -0.1  0 0 0 0.94 -0.1  0 0 0 0.94 -0.1  0 0 0 0 1" result="g"/><feComposite in="g" in2="SourceAlpha" operator="in"/></filter>
<pattern id="rope" x="616" y="0" width="9" height="6" patternUnits="userSpaceOnUse"><rect width="9" height="6" fill="#bdbdbd"/><path d="M-1 6.5 L10 1.5 M-1 0.5 L10 -4.5 M-1 12.5 L10 7.5" stroke="#5a5a5a" stroke-width="1.5"/><path d="M-1 4 L10 -1 M-1 10 L10 5" stroke="#ececec" stroke-width="1.2"/></pattern>
<pattern id="rope2" x="739" y="0" width="9" height="6" patternUnits="userSpaceOnUse"><rect width="9" height="6" fill="#bdbdbd"/><path d="M-1 6.5 L10 1.5 M-1 0.5 L10 -4.5 M-1 12.5 L10 7.5" stroke="#5a5a5a" stroke-width="1.5"/><path d="M-1 4 L10 -1 M-1 10 L10 5" stroke="#ececec" stroke-width="1.2"/></pattern>
<linearGradient id="ropeSh" x1="0" y1="0" x2="1" y2="0"><stop offset="0" stop-color="#000" stop-opacity=".65"/><stop offset=".3" stop-color="#000" stop-opacity="0"/><stop offset=".7" stop-color="#000" stop-opacity="0"/><stop offset="1" stop-color="#000" stop-opacity=".65"/></linearGradient>
<linearGradient id="plinth" x1="0" y1="0" x2="0" y2="1"><stop offset="0" stop-color="#fff"/><stop offset=".5" stop-color="#e4e4e4"/><stop offset="1" stop-color="#8a8a8a"/></linearGradient>
<radialGradient id="scal" cx=".5" cy=".5" r=".5"><stop offset="0" stop-color="#a2a2a2"/><stop offset=".55" stop-color="#7a7a7a"/><stop offset="1" stop-color="#1c1c1c"/></radialGradient>
<clipPath id="doorclip"><path id="doorpath" d="M597 194 L606 194 C622 193 634 188 645 178 C655 169 664 163.3 676 163.3 L688 163.3 C700 163.3 709 169 719 178 C730 188 742 193 758 194 L766.6 194 L766.6 612 L597 612 Z"/></clipPath>
<clipPath id="archclip"><path d="M625 307 A57 57 0 0 1 739 307 Z"/></clipPath>
</defs>
<rect x="556.5" y="123.5" width="251" height="531" fill="#ffff80" stroke="#000" stroke-width="1"/>
<g clip-path="url(#doorclip)">
<use href="#doorpath" fill="#000"/>
<use href="#doorpath" fill="none" stroke="#5a5a5a" stroke-width="25.6" stroke-linejoin="miter"/>
<use href="#doorpath" fill="none" stroke="#a8a8a8" stroke-width="24.2" stroke-linejoin="miter"/>
<use href="#doorpath" fill="none" stroke="#ececec" stroke-width="22.6" stroke-linejoin="miter"/>
<use href="#doorpath" fill="none" stroke="#ffffff" stroke-width="20.6" stroke-linejoin="miter"/>
<use href="#doorpath" fill="none" stroke="#e2e2e2" stroke-width="10.4" stroke-linejoin="miter"/>
<use href="#doorpath" fill="none" stroke="#2e2e2e" stroke-width="7.6" stroke-linejoin="miter"/>
<use href="#doorpath" fill="none" stroke="#e4e4e4" stroke-width="3.2" stroke-linejoin="miter"/>
<use href="#doorpath" fill="none" stroke="#b4b4b4" stroke-width="1.2" stroke-linejoin="miter"/>
</g>
<path d="M596 614.3 H768" stroke="#222" stroke-width="1.2"/>
<path d="M597 193.5 L606 193.5 C622 192.5 634 187.5 645 177.5 C655 168.5 664 162.8 676 162.8 L688 162.8 C700 162.8 709 168.5 719 177.5 C730 187.5 742 192.5 758 193.5 L767 193.5" fill="none" stroke="#222" stroke-width="1" stroke-dasharray="1.5 1.2"/>
<path d="M674 162.4 H690" stroke="#222" stroke-width="1.2"/>
<path d="M610.5 330 V540 M631 330 V540" stroke="#e6e6e6" stroke-width="1.2" fill="none"/>
<g transform="translate(1364 0) scale(-1 1)"><path d="M610.5 330 V540 M631 330 V540" stroke="#e6e6e6" stroke-width="1.2" fill="none"/></g>
<rect x="616" y="330" width="9" height="210" fill="url(#rope)"/><rect x="616" y="330" width="9" height="210" fill="url(#ropeSh)"/>
<rect x="739" y="330" width="9" height="210" fill="url(#rope2)"/><rect x="739" y="330" width="9" height="210" fill="url(#ropeSh)"/>
<rect x="612.5" y="258" width="5" height="49" fill="url(#rope)"/><rect x="612.5" y="258" width="5" height="49" fill="url(#ropeSh)"/>
<g transform="translate(1364 0) scale(-1 1)"><rect x="612.5" y="258" width="5" height="49" fill="url(#rope)"/><rect x="612.5" y="258" width="5" height="49" fill="url(#ropeSh)"/></g>
<rect x="610.5" y="307.5" width="20.8" height="22.2" fill="#0c0c0c" stroke="#f0f0f0" stroke-width="1.2"/><rect x="613.1" y="310.4" width="7.4" height="7.8" rx="1.8" fill="#a6a6a6"/><rect x="621.3" y="310.4" width="7.4" height="7.8" rx="1.8" fill="#a6a6a6"/><rect x="613.1" y="319.0" width="7.4" height="7.8" rx="1.8" fill="#a6a6a6"/><rect x="621.3" y="319.0" width="7.4" height="7.8" rx="1.8" fill="#a6a6a6"/><path d="M613.9 311.1 L627.9 326.1 M627.9 311.1 L613.9 326.1" stroke="#8a8a8a" stroke-width=".8"/><path d="M617.9 318.6 H623.9 M620.9 315.6 V321.6" stroke="#e8e8e8" stroke-width="1"/>
<g transform="translate(1364 0) scale(-1 1)"><rect x="610.5" y="307.5" width="20.8" height="22.2" fill="#0c0c0c" stroke="#f0f0f0" stroke-width="1.2"/><rect x="613.1" y="310.4" width="7.4" height="7.8" rx="1.8" fill="#a6a6a6"/><rect x="621.3" y="310.4" width="7.4" height="7.8" rx="1.8" fill="#a6a6a6"/><rect x="613.1" y="319.0" width="7.4" height="7.8" rx="1.8" fill="#a6a6a6"/><rect x="621.3" y="319.0" width="7.4" height="7.8" rx="1.8" fill="#a6a6a6"/><path d="M613.9 311.1 L627.9 326.1 M627.9 311.1 L613.9 326.1" stroke="#8a8a8a" stroke-width=".8"/><path d="M617.9 318.6 H623.9 M620.9 315.6 V321.6" stroke="#e8e8e8" stroke-width="1"/></g>
<rect x="610.5" y="540.5" width="20.8" height="22.2" fill="#0c0c0c" stroke="#f0f0f0" stroke-width="1.2"/><rect x="613.1" y="543.4" width="7.4" height="7.8" rx="1.8" fill="#a6a6a6"/><rect x="621.3" y="543.4" width="7.4" height="7.8" rx="1.8" fill="#a6a6a6"/><rect x="613.1" y="552.0" width="7.4" height="7.8" rx="1.8" fill="#a6a6a6"/><rect x="621.3" y="552.0" width="7.4" height="7.8" rx="1.8" fill="#a6a6a6"/><path d="M613.9 544.1 L627.9 559.1 M627.9 544.1 L613.9 559.1" stroke="#8a8a8a" stroke-width=".8"/><path d="M617.9 551.6 H623.9 M620.9 548.6 V554.6" stroke="#e8e8e8" stroke-width="1"/>
<g transform="translate(1364 0) scale(-1 1)"><rect x="610.5" y="540.5" width="20.8" height="22.2" fill="#0c0c0c" stroke="#f0f0f0" stroke-width="1.2"/><rect x="613.1" y="543.4" width="7.4" height="7.8" rx="1.8" fill="#a6a6a6"/><rect x="621.3" y="543.4" width="7.4" height="7.8" rx="1.8" fill="#a6a6a6"/><rect x="613.1" y="552.0" width="7.4" height="7.8" rx="1.8" fill="#a6a6a6"/><rect x="621.3" y="552.0" width="7.4" height="7.8" rx="1.8" fill="#a6a6a6"/><path d="M613.9 544.1 L627.9 559.1 M627.9 544.1 L613.9 559.1" stroke="#8a8a8a" stroke-width=".8"/><path d="M617.9 551.6 H623.9 M620.9 548.6 V554.6" stroke="#e8e8e8" stroke-width="1"/></g>
<path d="M615.3 563 V588.3 H748.7 V563" fill="none" stroke="#e2e2e2" stroke-width="1.3"/>
<path d="M618.8 563 V584.8 H745.2 V563" fill="none" stroke="#e2e2e2" stroke-width="1.3"/>
<path d="M622.3 563 V581.3 H741.7 V563" fill="none" stroke="#e2e2e2" stroke-width="1.3"/>
<path d="M626.3 563 V577.8 H737.7 V563" fill="none" stroke="#e2e2e2" stroke-width="1.3"/>
<rect x="614" y="591" width="136" height="9.5" fill="url(#plinth)"/><rect x="619" y="600" width="126" height="3" fill="#8c8c8c"/><path d="M614 591.5 H750" stroke="#fff" stroke-width="1"/>
<g fill="none">
<path d="M614.5 307 A67.5 67.5 0 0 1 749.5 307" stroke="#777" stroke-width="3.4"/>
<path d="M614.5 307 A67.5 67.5 0 0 1 749.5 307" stroke="#fff" stroke-width="2"/>
<path d="M618 307 A64 64 0 0 1 746 307" stroke="#e8e8e8" stroke-width="1.35"/>
<path d="M621 307 A61 61 0 0 1 743 307" stroke="#e8e8e8" stroke-width="1.35"/>
<path d="M624 307 A58 58 0 0 1 740 307" stroke="#e8e8e8" stroke-width="1.35"/>
</g>
<g clip-path="url(#archclip)">
<path d="M625 307 A57 57 0 0 1 739 307 H733 A51 51 0 0 0 631 307 Z" fill="#6e6e6e"/>
<circle cx="630.6" cy="296.1" r="8" fill="url(#scal)"/>
<circle cx="638.5" cy="277.6" r="8" fill="url(#scal)"/>
<circle cx="653.4" cy="263.0" r="8" fill="url(#scal)"/>
<circle cx="672.0" cy="255.5" r="8" fill="url(#scal)"/>
<circle cx="692.0" cy="255.5" r="8" fill="url(#scal)"/>
<circle cx="710.6" cy="263.0" r="8" fill="url(#scal)"/>
<circle cx="725.5" cy="277.6" r="8" fill="url(#scal)"/>
<circle cx="733.4" cy="296.1" r="8" fill="url(#scal)"/>
<circle cx="632.6" cy="296.5" r="1.3" fill="#e6e6e6"/>
<circle cx="640.1" cy="278.8" r="1.3" fill="#e6e6e6"/>
<circle cx="654.5" cy="264.6" r="1.3" fill="#e6e6e6"/>
<circle cx="672.4" cy="257.4" r="1.3" fill="#e6e6e6"/>
<circle cx="691.6" cy="257.4" r="1.3" fill="#e6e6e6"/>
<circle cx="709.5" cy="264.6" r="1.3" fill="#e6e6e6"/>
<circle cx="723.9" cy="278.8" r="1.3" fill="#e6e6e6"/>
<circle cx="731.4" cy="296.5" r="1.3" fill="#e6e6e6"/>
</g>
<path d="M625.7 307 A56.3 56.3 0 0 1 738.3 307" stroke="#3a3a3a" stroke-width="1.2" fill="none"/>
<g filter="url(#rl2)" fill="none" stroke="#fff" stroke-linecap="round">
<path d="M663 202 C653 192 660 178.8 682 178.8 C704 178.8 711 192 701 202" stroke-width="7.8"/>
<circle cx="663.8" cy="203" r="5.2" fill="#fff" stroke="none"/><circle cx="700.2" cy="203" r="5.2" fill="#fff" stroke="none"/>
</g>
<path d="M666.5 199 C659 192 666 183.5 682 183.5 C698 183.5 705 192 697.5 199" fill="none" stroke="#4a4a4a" stroke-width="1.1"/>
<g filter="url(#rl1)" fill="none" stroke="#fff" stroke-linecap="round"><path d="M672 200 C666 192 672 186.3 682 186.3 C692 186.3 698 192 692 200" stroke-width="4.2"/></g>
<path d="M675 200 C671 193 676 189.5 682 189.5 C688 189.5 693 193 689 200 Z" fill="#8e8e8e"/><ellipse cx="682" cy="193" rx="5" ry="2.6" fill="#b0b0b0"/>
<g filter="url(#rl2)" fill="#fff"><path d="M676.5 199 C673 210 664 216 660.5 222.5 L668 221 L666 227.5 L673 225 L674.5 231.5 L679 228 L682 234.5 L685 228 L689.5 231.5 L691 225 L698 227.5 L696 221 L703.5 222.5 C700 216 691 210 687.5 199 C684 197 680 197 676.5 199Z"/></g>
<path d="M679.5 203 C678 212 675 220 673.5 226 M684.5 203 C686 212 689 220 690.5 226 M677 202 C674 211 669 217 667 222 M687 202 C690 211 695 217 697 222" stroke="#555" stroke-width=".9" fill="none"/>
<g filter="url(#rl1)" fill="#fff"><path d="M682 198 C685.5 206 685.5 222 682 233.5 C678.5 222 678.5 206 682 198Z"/></g>
<g filter="url(#rl1)" fill="none" stroke="#fff" stroke-linecap="round"><path d="M658.5 198.5 C655 194 653 192 650.5 192.5" stroke-width="2.8"/><circle cx="650" cy="192.8" r="2.4" fill="#fff" stroke="none"/></g><g filter="url(#rl2)" fill="none" stroke="#fff" stroke-linecap="round"><path d="M658 204 C657 216 648 224 637 225 C629 225.5 625.5 221 628.5 217.5" stroke-width="6.2"/></g><g filter="url(#rl2)" fill="#fff" stroke="none"><path d="M621.5 205 C624.5 205.5 625 209 623.5 211.5 C627.5 214 628 220 625 224 C630 230 631 240 627 248 C626 242 624 238 622 236 C623 242 622 248 619 251 C620 255 616.5 258 613.5 256.5 C610 255 610.5 250.5 614 249.5 C612.5 244 614 238 614.5 232 C611.5 236 612 242 610 247 C606.5 240 607.5 229 612.5 222 C611 216 613 210 617.5 209 C617.5 206.5 619.5 205 621.5 205Z"/><path d="M624 212.5 C628 206 636 202 644.5 201.5 C642 204 643 205.5 640.5 206.5 C642 208 640 209.5 638 209.5 C639 212 636 213 634 212.5 C633 215 629 215.5 625 214.5Z"/><circle cx="614.8" cy="253.2" r="3.8"/></g><path d="M626 212.5 L642 203.5" stroke="#555" stroke-width="1"/><path d="M619 224 C616 232 617.5 240 617 248" stroke="#666" stroke-width=".9" fill="none"/>
<g transform="translate(1364 0) scale(-1 1)"><g filter="url(#rl1)" fill="none" stroke="#fff" stroke-linecap="round"><path d="M658.5 198.5 C655 194 653 192 650.5 192.5" stroke-width="2.8"/><circle cx="650" cy="192.8" r="2.4" fill="#fff" stroke="none"/></g><g filter="url(#rl2)" fill="none" stroke="#fff" stroke-linecap="round"><path d="M658 204 C657 216 648 224 637 225 C629 225.5 625.5 221 628.5 217.5" stroke-width="6.2"/></g><g filter="url(#rl2)" fill="#fff" stroke="none"><path d="M621.5 205 C624.5 205.5 625 209 623.5 211.5 C627.5 214 628 220 625 224 C630 230 631 240 627 248 C626 242 624 238 622 236 C623 242 622 248 619 251 C620 255 616.5 258 613.5 256.5 C610 255 610.5 250.5 614 249.5 C612.5 244 614 238 614.5 232 C611.5 236 612 242 610 247 C606.5 240 607.5 229 612.5 222 C611 216 613 210 617.5 209 C617.5 206.5 619.5 205 621.5 205Z"/><path d="M624 212.5 C628 206 636 202 644.5 201.5 C642 204 643 205.5 640.5 206.5 C642 208 640 209.5 638 209.5 C639 212 636 213 634 212.5 C633 215 629 215.5 625 214.5Z"/><circle cx="614.8" cy="253.2" r="3.8"/></g><path d="M626 212.5 L642 203.5" stroke="#555" stroke-width="1"/><path d="M619 224 C616 232 617.5 240 617 248" stroke="#666" stroke-width=".9" fill="none"/></g>
<g filter="url(#rl2)" fill="#fff"><path d="M665 420 C663 450 668 488 680 521 L702 505 C693 490 688 470 692 440 L686 428 L677 434 L672 418 Z"/></g>
<g filter="url(#rl1)" fill="none" stroke="#fff" stroke-linecap="round"><path d="M671 426 C670 416 672 410 677 405" stroke-width="4.5"/><path d="M680 436 C679 424 681 414 683 408" stroke-width="4"/></g>
<g filter="url(#rl1)" fill="#fff"><path d="M656.5 378 L665 379 L660 396 L657 408 L658.5 466 L652 466 L649 408 L650 396Z"/><path d="M649 383 L655 393 L649 391Z M670 385 L660 394 L667 393Z"/></g>
<g filter="url(#rl1)" fill="#fff"><ellipse cx="645.5" cy="403.0" rx="7.1" ry="3.7" transform="rotate(30 645.5 403.0)"/><ellipse cx="661.5" cy="404.0" rx="6.3" ry="3.6" transform="rotate(-32 661.5 404.0)"/><ellipse cx="645.6" cy="409.9" rx="7.6" ry="3.7" transform="rotate(30 645.6 409.9)"/><ellipse cx="662.0" cy="410.9" rx="6.8" ry="3.6" transform="rotate(-32 662.0 410.9)"/><ellipse cx="645.8" cy="416.8" rx="8.2" ry="3.7" transform="rotate(30 645.8 416.8)"/><ellipse cx="662.5" cy="417.8" rx="7.3" ry="3.6" transform="rotate(-32 662.5 417.8)"/><ellipse cx="646.0" cy="423.7" rx="8.7" ry="3.7" transform="rotate(30 646.0 423.7)"/><ellipse cx="663.0" cy="424.7" rx="7.8" ry="3.6" transform="rotate(-32 663.0 424.7)"/><ellipse cx="646.1" cy="430.6" rx="8.7" ry="3.7" transform="rotate(30 646.1 430.6)"/><ellipse cx="663.5" cy="431.6" rx="7.8" ry="3.6" transform="rotate(-32 663.5 431.6)"/><ellipse cx="646.2" cy="437.5" rx="8.2" ry="3.7" transform="rotate(30 646.2 437.5)"/><ellipse cx="664.0" cy="438.5" rx="7.3" ry="3.6" transform="rotate(-32 664.0 438.5)"/><ellipse cx="646.4" cy="444.4" rx="7.6" ry="3.7" transform="rotate(30 646.4 444.4)"/><ellipse cx="664.5" cy="445.4" rx="6.8" ry="3.6" transform="rotate(-32 664.5 445.4)"/><ellipse cx="646.5" cy="451.3" rx="7.1" ry="3.7" transform="rotate(30 646.5 451.3)"/><ellipse cx="665.0" cy="452.3" rx="6.3" ry="3.6" transform="rotate(-32 665.0 452.3)"/><ellipse cx="646.7" cy="458.2" rx="6.6" ry="3.7" transform="rotate(30 646.7 458.2)"/><ellipse cx="665.5" cy="459.2" rx="5.8" ry="3.6" transform="rotate(-32 665.5 459.2)"/></g>
<g filter="url(#rl1)" fill="#fff"><path d="M654 378 L651 356 L656.5 364 L659 353 L662.5 363 L666.5 355 L667.5 364 L674 358 L668 379Z"/></g>
<path d="M653.5 378.5 Q660 382 668 378.5" stroke="#e8e8e8" stroke-width="1.5" fill="none"/><path d="M658 366 L659 377 M662.5 366 L662 377" stroke="#6a6a6a" stroke-width=".8"/>
<g filter="url(#rl2)" fill="#fff"><path d="M668.5 357.9 L671.7 354.3 L674.9 350.7 L677.9 346.9 L680.1 342.7 L682.1 338.4 L684.1 334.1 L686.1 329.8 L688.0 325.4 L689.8 321.0 L691.5 316.6 L693.2 312.1 L694.8 307.6 L696.1 302.9 L697.0 298.0 L697.0 298.0 L693.3 301.4 L690.1 305.0 L687.1 308.7 L684.2 312.5 L681.3 316.4 L678.6 320.3 L675.9 324.2 L673.3 328.2 L670.7 332.1 L668.2 336.2 L665.8 340.2 L664.2 344.8 L662.8 349.4 L661.5 354.1Z"/><ellipse cx="663.0" cy="352.1" rx="6.5" ry="3.0" transform="rotate(-93 663.0 352.1)"/><ellipse cx="671.5" cy="353.0" rx="6.5" ry="3.0" transform="rotate(-29 671.5 353.0)"/><ellipse cx="667.3" cy="340.4" rx="6.5" ry="3.0" transform="rotate(-93 667.3 340.4)"/><ellipse cx="678.5" cy="342.8" rx="6.5" ry="3.0" transform="rotate(-29 678.5 342.8)"/><ellipse cx="673.6" cy="329.9" rx="6.5" ry="3.0" transform="rotate(-93 673.6 329.9)"/><ellipse cx="683.9" cy="331.8" rx="6.5" ry="3.0" transform="rotate(-29 683.9 331.8)"/><ellipse cx="680.3" cy="319.6" rx="6.5" ry="3.0" transform="rotate(-93 680.3 319.6)"/><ellipse cx="688.9" cy="320.6" rx="6.5" ry="3.0" transform="rotate(-29 688.9 320.6)"/><ellipse cx="687.4" cy="309.5" rx="6.5" ry="3.0" transform="rotate(-93 687.4 309.5)"/><ellipse cx="693.6" cy="309.2" rx="6.5" ry="3.0" transform="rotate(-29 693.6 309.2)"/><ellipse cx="692.7" cy="305.7" rx="11.0" ry="4.0" transform="rotate(-65 692.7 305.7)"/></g><path d="M672.6 353.1 Q668.3 350.1 670.5 346.0 M663.4 348.0 Q668.3 350.1 670.5 346.0M679.5 343.0 Q674.2 339.4 677.0 334.3 M668.3 336.8 Q674.2 339.4 677.0 334.3M684.8 331.8 Q680.1 328.6 682.6 324.2 M674.9 326.4 Q680.1 328.6 682.6 324.2M689.7 320.4 Q686.0 317.9 688.0 314.3 M681.9 316.1 Q686.0 317.9 688.0 314.3M694.2 308.7 Q692.0 307.1 693.1 305.0 M689.5 306.1 Q692.0 307.1 693.1 305.0" stroke="#555" stroke-width="1" fill="none" opacity=".8"/>
<g filter="url(#rl2)" fill="#fff"><ellipse cx="668.5" cy="349" rx="7.5" ry="10" transform="rotate(28 668.5 349)"/></g>
<g filter="url(#rl2)" fill="#fff"><path d="M684.6 393.7 L688.7 389.5 L692.8 385.3 L696.7 380.9 L699.3 375.8 L701.9 370.7 L704.5 365.6 L706.9 360.4 L709.3 355.2 L711.6 349.9 L713.8 344.6 L715.8 339.1 L717.8 333.7 L719.5 328.0 L720.5 322.0 L720.5 322.0 L715.7 325.8 L711.7 330.1 L707.8 334.4 L704.1 338.9 L700.5 343.4 L697.0 348.0 L693.6 352.6 L690.2 357.3 L687.0 362.0 L683.8 366.7 L680.7 371.5 L678.7 377.0 L677.1 382.6 L675.4 388.3Z"/><ellipse cx="677.2" cy="386.4" rx="8.6" ry="4.0" transform="rotate(-92 677.2 386.4)"/><ellipse cx="688.1" cy="388.2" rx="8.6" ry="4.0" transform="rotate(-28 688.1 388.2)"/><ellipse cx="681.4" cy="374.4" rx="8.6" ry="4.0" transform="rotate(-92 681.4 374.4)"/><ellipse cx="696.0" cy="378.3" rx="8.6" ry="4.0" transform="rotate(-28 696.0 378.3)"/><ellipse cx="687.9" cy="363.7" rx="8.6" ry="4.0" transform="rotate(-92 687.9 363.7)"/><ellipse cx="701.8" cy="367.3" rx="8.6" ry="4.0" transform="rotate(-28 701.8 367.3)"/><ellipse cx="694.9" cy="353.4" rx="8.6" ry="4.0" transform="rotate(-92 694.9 353.4)"/><ellipse cx="707.3" cy="356.0" rx="8.6" ry="4.0" transform="rotate(-28 707.3 356.0)"/><ellipse cx="702.2" cy="343.2" rx="8.6" ry="4.0" transform="rotate(-92 702.2 343.2)"/><ellipse cx="712.5" cy="344.6" rx="8.6" ry="4.0" transform="rotate(-28 712.5 344.6)"/><ellipse cx="710.0" cy="333.2" rx="8.6" ry="4.0" transform="rotate(-92 710.0 333.2)"/><ellipse cx="717.3" cy="332.9" rx="8.6" ry="4.0" transform="rotate(-28 717.3 332.9)"/><ellipse cx="715.2" cy="331.0" rx="13.0" ry="4.7" transform="rotate(-64 715.2 331.0)"/></g><path d="M688.9 389.0 Q683.5 385.1 686.5 379.9 M677.4 382.3 Q683.5 385.1 686.5 379.9M696.9 379.5 Q689.8 374.3 693.8 367.5 M681.9 370.6 Q689.8 374.3 693.8 367.5M702.6 368.3 Q696.1 363.5 699.8 357.3 M688.8 360.1 Q696.1 363.5 699.8 357.3M708.1 356.8 Q702.5 352.7 705.6 347.4 M696.1 349.8 Q702.5 352.7 705.6 347.4M713.2 345.1 Q708.8 341.9 711.2 337.8 M703.9 339.7 Q708.8 341.9 711.2 337.8M717.7 333.1 Q715.1 331.2 716.6 328.7 M712.2 329.8 Q715.1 331.2 716.6 328.7" stroke="#555" stroke-width="1" fill="none" opacity=".8"/>
<g filter="url(#rl1)" fill="#fff"><ellipse cx="682.6" cy="391.5" rx="5" ry="6.8" transform="rotate(0 682.6 391.5)"/><ellipse cx="675.0" cy="397.0" rx="5" ry="6.8" transform="rotate(-72 675.0 397.0)"/><ellipse cx="677.9" cy="406.0" rx="5" ry="6.8" transform="rotate(-144 677.9 406.0)"/><ellipse cx="687.3" cy="406.0" rx="5" ry="6.8" transform="rotate(-216 687.3 406.0)"/><ellipse cx="690.2" cy="397.0" rx="5" ry="6.8" transform="rotate(72 690.2 397.0)"/></g><circle cx="682.6" cy="399.5" r="2.8" fill="#d8d8d8" stroke="#666" stroke-width=".8"/>
<g filter="url(#rl1)" fill="#fff"><ellipse cx="724.0" cy="379.3" rx="5.2" ry="2.7" transform="rotate(300 724.0 379.3)"/><ellipse cx="718.6" cy="380.1" rx="5.2" ry="2.7" transform="rotate(224 718.6 380.1)"/><ellipse cx="725.9" cy="384.5" rx="7.0" ry="2.7" transform="rotate(306 725.9 384.5)"/><ellipse cx="718.5" cy="384.7" rx="7.0" ry="2.7" transform="rotate(230 718.5 384.7)"/><ellipse cx="727.2" cy="390.0" rx="8.6" ry="2.7" transform="rotate(313 727.2 390.0)"/><ellipse cx="718.2" cy="389.2" rx="8.6" ry="2.7" transform="rotate(237 718.2 389.2)"/><ellipse cx="727.8" cy="395.9" rx="10.0" ry="2.7" transform="rotate(320 727.8 395.9)"/><ellipse cx="717.5" cy="393.7" rx="10.0" ry="2.7" transform="rotate(244 717.5 393.7)"/><ellipse cx="727.5" cy="402.1" rx="11.2" ry="2.7" transform="rotate(327 727.5 402.1)"/><ellipse cx="716.5" cy="398.4" rx="11.2" ry="2.7" transform="rotate(251 716.5 398.4)"/><ellipse cx="726.3" cy="408.6" rx="12.0" ry="2.7" transform="rotate(333 726.3 408.6)"/><ellipse cx="714.9" cy="403.3" rx="12.0" ry="2.7" transform="rotate(257 714.9 403.3)"/><ellipse cx="724.0" cy="415.3" rx="12.4" ry="2.7" transform="rotate(339 724.0 415.3)"/><ellipse cx="712.8" cy="408.7" rx="12.4" ry="2.7" transform="rotate(263 712.8 408.7)"/><ellipse cx="720.5" cy="422.0" rx="12.5" ry="2.7" transform="rotate(344 720.5 422.0)"/><ellipse cx="709.9" cy="414.4" rx="12.5" ry="2.7" transform="rotate(268 709.9 414.4)"/><ellipse cx="715.9" cy="428.7" rx="12.1" ry="2.7" transform="rotate(348 715.9 428.7)"/><ellipse cx="706.2" cy="420.4" rx="12.1" ry="2.7" transform="rotate(272 706.2 420.4)"/><ellipse cx="710.5" cy="435.2" rx="11.9" ry="2.7" transform="rotate(353 710.5 435.2)"/><ellipse cx="701.7" cy="426.4" rx="11.9" ry="2.7" transform="rotate(277 701.7 426.4)"/><ellipse cx="704.6" cy="441.5" rx="11.9" ry="2.7" transform="rotate(356 704.6 441.5)"/><ellipse cx="696.3" cy="432.2" rx="11.9" ry="2.7" transform="rotate(280 696.3 432.2)"/></g><g filter="url(#rl2)" fill="#fff"><path d="M721.5 378 C729 392 729 416 714 432 C706 440 696 446 686 450 C688 434 696 412 706 398 C711 390 717 382 721.5 378Z"/></g><path d="M720.5 388 C725 402 718 424 694 443" stroke="#6a6a6a" stroke-width="4.5" fill="none" stroke-dasharray="1.1 1.5"/>
<g filter="url(#rl2)" fill="#fff"><ellipse cx="725" cy="437" rx="9" ry="5.5" transform="rotate(-30 725 437)"/><ellipse cx="718" cy="445" rx="11" ry="5.5" transform="rotate(-5 718 445)"/><ellipse cx="701" cy="447" rx="10" ry="5" transform="rotate(-30 701 447)"/></g>
<g filter="url(#rl3)" fill="#fff"><path d="M676.5 494 C675 470 680 452 693 446 C706 441 724 445 730.5 460 C734.5 470 731.5 484 723.5 497 C724 488 723 481 720 476.5 C722 468 718 460 708 459 C698 458 692 468 690.5 480 L691.5 496 Z"/></g>
<g filter="url(#rl2)" fill="#fff"><path d="M716.5 461 C720 474 713 485 707 494.5 C704.5 484 706 476 710 469Z"/><circle cx="704" cy="466.5" r="3.7"/></g>
<path d="M703 463 C708 459.5 714 462 714 468" stroke="#fff" stroke-width="2.2" fill="none" filter="url(#rl1)"/>
<g filter="url(#rl2)" fill="#fff"><path d="M670 480 C672 496 676 510 680 522 L702.5 505 C698 499 695 492 693 484 Z"/></g>
<path d="M670 428 C670 455 675 488 685 516 M675.5 436 C675 460 680 488 690 512 M681 438 C680 462 685 488 695 509 M686 446 C684 466 689 488 698.5 506" stroke="#4c4c4c" stroke-width="1" fill="none" opacity=".7"/>
<g filter="url(#rl1)" fill="#fff"><circle cx="670.5" cy="478.0" r="3"/><circle cx="668.7" cy="473.5" r="3"/><circle cx="664.2" cy="471.7" r="3"/><circle cx="659.7" cy="473.5" r="3"/><circle cx="657.9" cy="478.0" r="3"/><circle cx="659.7" cy="482.5" r="3"/><circle cx="664.2" cy="484.3" r="3"/><circle cx="668.7" cy="482.5" r="3"/></g><circle cx="664.2" cy="478" r="3" fill="#bdbdbd" stroke="#eee" stroke-width="1"/>
<g filter="url(#rl2)" fill="#fff"><circle cx="647" cy="495.5" r="9"/><ellipse cx="659" cy="503" rx="7" ry="3.4" transform="rotate(-40 659 503)"/><ellipse cx="666" cy="508" rx="6" ry="3" transform="rotate(20 666 508)"/><ellipse cx="657" cy="510" rx="5" ry="2.6" transform="rotate(10 657 510)"/></g>
<path d="M642 494 Q647 488 652 494 Q647 499 643.5 497 M640.5 499 Q647 505 653.5 498 M644 490 Q650 486 654 491" stroke="#6e6e6e" stroke-width=".9" fill="none"/>
<g filter="url(#rl3)" fill="#fff"><path d="M687 520 C672 508 650 509 642 523 C634 538 641 552 658 555 C668 557 674 557 678 562 C678 553 671 546 660 543 C652 540 650 534 653 529 C657 522 668 520 680 529 Z"/></g>
<g filter="url(#rl2)" fill="#fff"><path d="M650 535 C662 540 674 536 684.5 541.5 C676 547 662 548 651 544Z"/><circle cx="662.5" cy="533" r="3.5"/></g>
<path d="M655 527 C660 524 666 527 665 533" stroke="#fff" stroke-width="2.2" fill="none" filter="url(#rl1)"/>
<g filter="url(#rl1)" fill="none" stroke="#fff" stroke-linecap="round">
<path d="M684 525 L696.5 556" stroke-width="5.2"/>
<path d="M688 522 L702.5 552.5" stroke-width="5.2"/>
<path d="M691.5 518.5 L708.5 548.5" stroke-width="5.2"/>
<path d="M695 514.5 L714.5 544" stroke-width="5.2"/>
<path d="M698 510.5 L720.5 539" stroke-width="5.2"/>
<path d="M701 506 L725.5 533.5" stroke-width="5.2"/>
</g>
<g filter="url(#rl2)" fill="none" stroke="#fff" stroke-linecap="round"><path d="M680.5 528 C692 526 702 516 703.5 500" stroke-width="7"/></g>
<!-- ===== RIGHT PANEL ICONS ===== -->
<defs><radialGradient id="bulb" cx=".45" cy=".35" r=".6"><stop offset="0" stop-color="#fff8b0"/><stop offset=".6" stop-color="#f8cc28"/><stop offset="1" stop-color="#d89810"/></radialGradient>
<g id="bulbg" transform="scale(.85)"><path d="M0 -6 C3.6 -6 5 -3.5 5 -1.5 C5 1 3 2.5 2.6 4.5 H-2.6 C-3 2.5 -5 1 -5 -1.5 C-5 -3.5 -3.6 -6 0 -6Z" fill="url(#bulb)"/><rect x="-2.2" y="4.5" width="4.4" height="3" fill="#201810"/></g></defs>
<path d="M1108 168.500H1118L1116 164H1108Z" fill="#bdbdbd"/>
<path d="M1104 153.500H1109L1112 156V158.500L1116 160V168H1104Z" fill="url(#gPage)"/><path d="M1107 153.500V168M1110.5 156V168" stroke="#e8eef6" stroke-width=".7"/>
<path d="M1132 166.5 L1146 165 L1144.5 161 L1134 162Z" fill="#c4c4c4"/>
<path d="M1130.5 157 Q1131 153.5 1134 153.8 L1140 154.5 L1143 158 L1143.5 161 L1146 161 L1143.5 165.5 L1131.5 166.500Z" fill="url(#gFold)"/><path d="M1131.5 166.5 L1134 160.5 L1146 160.3 L1143.5 165.500Z" fill="#f3e300"/>
<rect x="1158" y="154" width="12.5" height="13" rx=".8" fill="#1c5acb"/><rect x="1160.2" y="154.3" width="8" height="5.5" fill="#e9edf2"/><rect x="1160.8" y="162" width="6.8" height="5" fill="#b4bcc8"/><rect x="1161.8" y="163" width="2" height="3.5" fill="#1c5acb"/><path d="M1170.5 166H1173" stroke="#bbb" stroke-width="1.5"/>
<path d="M1190 169H1202L1200.5 164H1190Z" fill="#c8c8c8"/>
<path d="M1186 153.500H1193L1195 155.500V165H1186Z" fill="#c09868"/><path d="M1189.5 156.500H1197L1199.5 159V168H1189.500Z" fill="#cfa878" stroke="#b48a58" stroke-width=".5"/><path d="M1186 155 V164" stroke="#a07848" stroke-width="1" stroke-dasharray="1 1"/>
<path d="M1212.5 163 L1221 158.5 L1230 163 L1221 168.500Z" fill="#b81414"/><path d="M1216 163 L1221 160.5 L1226 163 L1221 166Z" fill="#e83030"/>
<path d="M1212.5 157 L1221 152.5 L1230 157 L1221 161.500Z" fill="#8888e0" stroke="#6a6ac8" stroke-width=".6"/><path d="M1219.5 159.500H1222.500V163H1224.500L1221 166.500L1217.5 163H1219.500Z" fill="#f4d020"/>
<path d="M1243 153H1251L1254.5 156V169H1243Z" fill="#8a9cc4"/><path d="M1251 153V156H1254.500Z" fill="#dfe6f2"/><use href="#bulbg" x="1248.5" y="161.5" transform="translate(0 0)"/>
<rect x="1270" y="153.5" width="14.5" height="14.5" fill="#000"/><g fill="#b0b0b0"><circle cx="1274" cy="156.5" r="1.5"/><circle cx="1280.5" cy="156.5" r="1.5"/><ellipse cx="1277.2" cy="158.5" rx="3.2" ry="2.7"/><ellipse cx="1277.2" cy="163.5" rx="4.6" ry="3.8"/></g><ellipse cx="1277.2" cy="164" rx="2.2" ry="2" fill="#6e6e6e"/><path d="M1282 157H1284M1283 157V160" stroke="#ddd" stroke-width=".8"/>
<path d="M1299 157.5 L1300.5 166.5 Q1304 168 1307.5 166.5 L1309 157.500Z" fill="#4a8ae8"/><ellipse cx="1304" cy="157.5" rx="5" ry="2" fill="#a8c8f8" stroke="#3a70c8" stroke-width=".7"/>
<use href="#bulbg" x="1328.5" y="160.5"/><use href="#bulbg" x="1335" y="159"/>
<!-- layer row -->
<path d="M1114 190 C1113 181 1118 177 1124 177.5 C1130 178 1133 184 1132.5 190 L1127 189 C1126 184 1122 183.5 1120 186 L1119 190Z" fill="#c9b468"/><path d="M1114 190 C1113.5 183 1117.5 179.5 1122 180.5 C1126 181.5 1128 185 1127.5 189.5 L1119 190.500Z" fill="#7484cc"/><path d="M1114 188 C1114.5 182 1119 178.5 1124 179" stroke="#e8dca0" stroke-width="1.2" fill="none"/>
<path d="M1112 193.500H1119M1115.5 190V197" stroke="#000" stroke-width="1.3"/>
<use href="#bulbg" x="1331.5" y="186"/>
<g stroke="#fff" stroke-width="1.8" fill="none"><path d="M1318 212V206.500M1314.5 209.500L1318 206L1321.5 209.5"/><path d="M1336 206V211.500M1332.5 208.500L1336 212L1339.5 208.5"/></g>
</svg>
</body>
</html>
